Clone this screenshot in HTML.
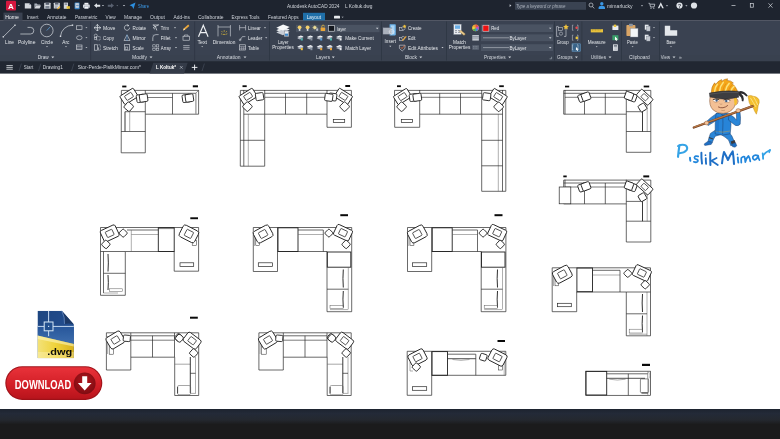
<!DOCTYPE html>
<html><head><meta charset="utf-8"><title>AutoCAD</title>
<style>
html,body{margin:0;padding:0;background:#fff;}
body{width:780px;height:439px;overflow:hidden;font-family:"Liberation Sans",sans-serif;}
svg{display:block;font-family:"Liberation Sans",sans-serif;}
</style></head><body>
<svg width="780" height="439" viewBox="0 0 780 439">
<defs><filter id="soft" x="0" y="0" width="780" height="439" filterUnits="userSpaceOnUse" color-interpolation-filters="sRGB"><feGaussianBlur stdDeviation="0.28"/></filter></defs>
<g filter="url(#soft)">
<rect x="0" y="0" width="780" height="20.6" fill="#1e242f" />
<rect x="0" y="20.4" width="780" height="41.5" fill="#3a4251" />
<rect x="0" y="55" width="780" height="6.4" fill="#39414f" />
<rect x="0" y="61.2" width="780" height="12.4" fill="#212732" />
<defs><linearGradient id="gBot" x1="0" y1="0" x2="0" y2="1"><stop offset="0" stop-color="#1d232f"/><stop offset="0.3" stop-color="#232a38"/><stop offset="0.7" stop-color="#24282f"/><stop offset="1" stop-color="#1b1b1c"/></linearGradient></defs>
<rect x="0" y="424" width="780" height="15" fill="#1b1b1c" />
<rect x="0" y="409" width="780" height="15.5" fill="url(#gBot)" />
<rect x="6" y="0.8" width="10" height="9.6" rx="1" fill="#d6173f"/>
<text x="11" y="8.68" font-size="8" fill="#fff" text-anchor="middle" font-weight="bold" font-style="normal" >A</text>
<path d="M17.8 5.0h2l-1 1.1z" fill="#cfd3da"/>
<path d="M24.8 3.2h4.4l2 1.8v3.4h-6.4z" fill="#d3d7dd"/><path d="M29.2 3.2v1.8h2z" fill="#8a93a1"/>
<path d="M34.4 3.6h2.4l0.8 0.9h2.6v1h-4.6l-1.2 2.9z" fill="#aab1bc"/><path d="M35.8 5.5h5.2l-1.4 3h-5.2z" fill="#d3d7dd"/>
<rect x="44.2" y="2.8" width="6.4" height="6" rx="0.4" fill="#d3d7dd"/><rect x="45.6" y="2.8" width="3.6" height="2" fill="#596170"/><rect x="45.4" y="6" width="4" height="2.8" fill="#7b8390"/>
<rect x="53.8" y="2.8" width="6" height="5.8" rx="0.4" fill="#d3d7dd"/><rect x="55" y="2.8" width="3.4" height="1.8" fill="#596170"/><path d="M57 8.8l2.6-2.8 0.9 0.9-2.6 2.6z" fill="#e8b23a"/><path d="M54.8 6h3m-3 1.300h2" stroke="#596170" stroke-width="0.5"/>
<rect x="63.8" y="2.600" width="4.200" height="6.200" fill="#d3d7dd"/><rect x="64.600" y="3.400" width="2.600" height="1.400" fill="#7b8390"/><rect x="66.600" y="6.200" width="3.300" height="2.600" fill="#e8c43a"/>
<rect x="74.600" y="2.400" width="5" height="6.800" rx="0.700" fill="#3b86c8"/><rect x="75.400" y="3.200" width="3.400" height="4.600" fill="#d3d7dd"/><path d="M76 5.500h2.200m-0.900-0.900l0.900 0.900-0.900 0.900" stroke="#2b6cb0" stroke-width="0.5" fill="none"/>
<rect x="83" y="4.400" width="6.800" height="3.400" rx="0.600" fill="#d3d7dd"/><rect x="84.400" y="2.800" width="4" height="1.900" fill="#eef0f3"/><rect x="84.400" y="6.600" width="4" height="2.200" fill="#f7f8fa" stroke="#8a93a1" stroke-width="0.3"/>
<path d="M94 5.5l3-2.3v1.5h3.2v2h-3.2v1.2z" fill="#dfe3e8"/>
<path d="M101.9 5.05h2.2l-1.1 1.2100000000000002z" fill="#c5cad2"/>
<path d="M114 5.5l-3-2.3v1.5h-3.2v2h3.2v1.2z" fill="#596170"/>
<path d="M116.39999999999999 5.1499999999999995h1.8l-0.9 0.9900000000000001z" fill="#7b8390"/>
<path d="M122.8 5.0h2.4l-1.2 1.32z" fill="#c5cad2"/>
<path d="M129.5 5.3l6-2.8-2 6.5-1.3-2.4z" fill="#2c8fe0"/>
<text x="138" y="7.65" font-size="5.7" fill="#3b98e6" text-anchor="start" font-weight="normal" font-style="normal"  textLength="11.0" lengthAdjust="spacingAndGlyphs">Share</text>
<text x="287" y="7.58" font-size="5.5" fill="#d3d7dd" text-anchor="start" font-weight="normal" font-style="normal"  textLength="52.5" lengthAdjust="spacingAndGlyphs">Autodesk AutoCAD 2024</text>
<text x="345" y="7.58" font-size="5.5" fill="#d3d7dd" text-anchor="start" font-weight="normal" font-style="normal"  textLength="27.4" lengthAdjust="spacingAndGlyphs">L Koltuk.dwg</text>
<path d="M509.6 4.2l1.8 1.4-1.8 1.4z" fill="#c9ced6"/>
<rect x="515" y="2" width="71" height="7.8" fill="#3a4352" />
<text x="516" y="7.56" font-size="4.6" fill="#aab1bc" text-anchor="start" font-weight="normal" font-style="italic"  textLength="49.4" lengthAdjust="spacingAndGlyphs">Type a keyword or phrase</text>
<circle cx="591" cy="5" r="2" fill="none" stroke="#c9ced6" stroke-width="0.7"/><path d="M592.4 6.5l1.8 1.9" stroke="#c9ced6" stroke-width="0.8"/>
<circle cx="601.8" cy="3.8" r="1.7" fill="#3b98e6"/><path d="M598.6 9v-1.2q0-2 3.2-2t3.2 2v1.2z" fill="#3b98e6"/>
<text x="607" y="7.82" font-size="5.6" fill="#d3d7dd" text-anchor="start" font-weight="normal" font-style="normal"  textLength="25.6" lengthAdjust="spacingAndGlyphs">mimarlucky</text>
<path d="M640.9 5.25h2.2l-1.1 1.2100000000000002z" fill="#c5cad2"/>
<path d="M648.5 3.3h1.2l0.8 3.6h3.6l0.7-2.7h-4.6" fill="none" stroke="#c9ced6" stroke-width="0.8"/><circle cx="651" cy="8.2" r="0.6" fill="#c9ced6"/><circle cx="653.8" cy="8.2" r="0.6" fill="#c9ced6"/>
<path d="M657.8 8.3l3-6 3 6h-1.6l-1.4-3-1.4 3z" fill="#dfe3e8"/>
<path d="M665.9 5.25h2.2l-1.1 1.2100000000000002z" fill="#c5cad2"/>
<circle cx="679.5" cy="5.5" r="3.1" fill="#dfe3e8"/>
<text x="679.5" y="7.50" font-size="5" fill="#1d232e" text-anchor="middle" font-weight="bold" font-style="normal" >?</text>
<path d="M685.3 5.25h2.2l-1.1 1.2100000000000002z" fill="#c5cad2"/>
<circle cx="694" cy="5.5" r="3.1" fill="#dfe3e8"/>
<path d="M731.5 5.5h4" stroke="#d3d7dd" stroke-width="0.7"/>
<rect x="750.3" y="3.6" width="3" height="3.6" fill="none" stroke="#d3d7dd" stroke-width="0.7"/>
<path d="M768.5 3.3l4 4.4m0-4.4l-4 4.4" stroke="#d3d7dd" stroke-width="0.7"/>
<rect x="3.5" y="12.6" width="19" height="8" fill="#3a4251" />
<text x="5.3" y="18.95" font-size="5.7" fill="#f2f4f6" text-anchor="start" font-weight="normal" font-style="normal"  textLength="13.6" lengthAdjust="spacingAndGlyphs">Home</text>
<text x="27" y="18.95" font-size="5.7" fill="#cfd3da" text-anchor="start" font-weight="normal" font-style="normal"  textLength="11.4" lengthAdjust="spacingAndGlyphs">Insert</text>
<text x="47" y="18.95" font-size="5.7" fill="#cfd3da" text-anchor="start" font-weight="normal" font-style="normal"  textLength="19.5" lengthAdjust="spacingAndGlyphs">Annotate</text>
<text x="75" y="18.95" font-size="5.7" fill="#cfd3da" text-anchor="start" font-weight="normal" font-style="normal"  textLength="22.4" lengthAdjust="spacingAndGlyphs">Parametric</text>
<text x="105.6" y="18.95" font-size="5.7" fill="#cfd3da" text-anchor="start" font-weight="normal" font-style="normal"  textLength="10.2" lengthAdjust="spacingAndGlyphs">View</text>
<text x="124" y="18.95" font-size="5.7" fill="#cfd3da" text-anchor="start" font-weight="normal" font-style="normal"  textLength="18.0" lengthAdjust="spacingAndGlyphs">Manage</text>
<text x="150" y="18.95" font-size="5.7" fill="#cfd3da" text-anchor="start" font-weight="normal" font-style="normal"  textLength="15.0" lengthAdjust="spacingAndGlyphs">Output</text>
<text x="173.5" y="18.95" font-size="5.7" fill="#cfd3da" text-anchor="start" font-weight="normal" font-style="normal"  textLength="16.5" lengthAdjust="spacingAndGlyphs">Add-ins</text>
<text x="198" y="18.95" font-size="5.7" fill="#cfd3da" text-anchor="start" font-weight="normal" font-style="normal"  textLength="25.6" lengthAdjust="spacingAndGlyphs">Collaborate</text>
<text x="231.5" y="18.95" font-size="5.7" fill="#cfd3da" text-anchor="start" font-weight="normal" font-style="normal"  textLength="28.0" lengthAdjust="spacingAndGlyphs">Express Tools</text>
<text x="268" y="18.95" font-size="5.7" fill="#cfd3da" text-anchor="start" font-weight="normal" font-style="normal"  textLength="30.7" lengthAdjust="spacingAndGlyphs">Featured Apps</text>
<rect x="303" y="12.8" width="22" height="7.6" fill="#1f6fa8" />
<text x="306.7" y="18.95" font-size="5.7" fill="#eaf3fb" text-anchor="start" font-weight="normal" font-style="normal"  textLength="14.3" lengthAdjust="spacingAndGlyphs">Layout</text>
<rect x="334" y="15.7" width="6" height="2.8" rx="0.5" fill="#e7eaee"/>
<path d="M341.5 16.65h2.2l-1.1 1.2100000000000002z" fill="#d0d4da"/>
<rect x="90.3" y="21.5" width="0.8" height="39" fill="#2e3643" />
<rect x="194.3" y="21.5" width="0.8" height="39" fill="#2e3643" />
<rect x="269.2" y="21.5" width="0.8" height="39" fill="#2e3643" />
<rect x="381" y="21.5" width="0.8" height="39" fill="#2e3643" />
<rect x="446" y="21.5" width="0.8" height="39" fill="#2e3643" />
<rect x="554.2" y="21.5" width="0.8" height="39" fill="#2e3643" />
<rect x="581.5" y="21.5" width="0.8" height="39" fill="#2e3643" />
<rect x="621" y="21.5" width="0.8" height="39" fill="#2e3643" />
<rect x="659" y="21.5" width="0.8" height="39" fill="#2e3643" />
<text x="37.7" y="59.18" font-size="5.5" fill="#d6dae0" text-anchor="start" font-weight="normal" font-style="normal"  textLength="11.0" lengthAdjust="spacingAndGlyphs">Draw</text>
<path d="M51.349999999999994 56.575h2.9l-1.45 1.595z" fill="#d0d4da"/>
<text x="132" y="59.18" font-size="5.5" fill="#d6dae0" text-anchor="start" font-weight="normal" font-style="normal"  textLength="15.0" lengthAdjust="spacingAndGlyphs">Modify</text>
<path d="M149.55 56.575h2.9l-1.45 1.595z" fill="#d0d4da"/>
<text x="216.7" y="59.18" font-size="5.5" fill="#d6dae0" text-anchor="start" font-weight="normal" font-style="normal"  textLength="23.8" lengthAdjust="spacingAndGlyphs">Annotation</text>
<path d="M243.55 56.575h2.9l-1.45 1.595z" fill="#d0d4da"/>
<text x="316" y="59.18" font-size="5.5" fill="#d6dae0" text-anchor="start" font-weight="normal" font-style="normal"  textLength="14.0" lengthAdjust="spacingAndGlyphs">Layers</text>
<path d="M331.85 56.575h2.9l-1.45 1.595z" fill="#d0d4da"/>
<text x="405" y="59.18" font-size="5.5" fill="#d6dae0" text-anchor="start" font-weight="normal" font-style="normal"  textLength="12.0" lengthAdjust="spacingAndGlyphs">Block</text>
<path d="M419.35 56.575h2.9l-1.45 1.595z" fill="#d0d4da"/>
<text x="484" y="59.18" font-size="5.5" fill="#d6dae0" text-anchor="start" font-weight="normal" font-style="normal"  textLength="21.6" lengthAdjust="spacingAndGlyphs">Properties</text>
<path d="M508.25 56.575h2.9l-1.45 1.595z" fill="#d0d4da"/>
<text x="557" y="59.18" font-size="5.5" fill="#d6dae0" text-anchor="start" font-weight="normal" font-style="normal"  textLength="15.5" lengthAdjust="spacingAndGlyphs">Groups</text>
<path d="M574.9499999999999 56.575h2.9l-1.45 1.595z" fill="#d0d4da"/>
<text x="590.8" y="59.18" font-size="5.5" fill="#d6dae0" text-anchor="start" font-weight="normal" font-style="normal"  textLength="15.2" lengthAdjust="spacingAndGlyphs">Utilities</text>
<path d="M608.55 56.575h2.9l-1.45 1.595z" fill="#d0d4da"/>
<text x="629" y="59.18" font-size="5.5" fill="#d6dae0" text-anchor="start" font-weight="normal" font-style="normal"  textLength="20.7" lengthAdjust="spacingAndGlyphs">Clipboard</text>
<text x="660.8" y="59.18" font-size="5.5" fill="#d6dae0" text-anchor="start" font-weight="normal" font-style="normal"  textLength="9.2" lengthAdjust="spacingAndGlyphs">View</text>
<path d="M672.55 56.575h2.9l-1.45 1.595z" fill="#d0d4da"/>
<text x="679" y="59.00" font-size="5" fill="#c5cad2" text-anchor="start" font-weight="normal" font-style="normal" >&#187;</text>
<path d="M549.6 58.8h2v-2" fill="none" stroke="#aab1bc" stroke-width="0.6"/>
<path d="M3.3 36.8L15 25.2" stroke="#d6dae0" stroke-width="0.7"/><rect x="2.6" y="36.1" width="1.4" height="1.4" fill="#d6dae0"/><rect x="14.3" y="24.5" width="1.4" height="1.4" fill="#d6dae0"/>
<text x="9.5" y="43.82" font-size="5.6" fill="#e3e6ea" text-anchor="middle" font-weight="normal" font-style="normal"  textLength="9.0" lengthAdjust="spacingAndGlyphs">Line</text>
<path d="M20.3 34h10.2a3.3 3.3 0 0 0 0-6.6h-3" fill="none" stroke="#d6dae0" stroke-width="0.7"/>
<text x="26.7" y="43.82" font-size="5.6" fill="#e3e6ea" text-anchor="middle" font-weight="normal" font-style="normal"  textLength="17.4" lengthAdjust="spacingAndGlyphs">Polyline</text>
<circle cx="46.8" cy="30.5" r="6.3" fill="none" stroke="#d6dae0" stroke-width="0.7"/><path d="M46.8 30.5l3.6-3.8" stroke="#5aa7e8" stroke-width="0.7"/>
<text x="47" y="43.82" font-size="5.6" fill="#e3e6ea" text-anchor="middle" font-weight="normal" font-style="normal"  textLength="12.0" lengthAdjust="spacingAndGlyphs">Circle</text>
<path d="M45.95 46.175000000000004h2.1l-1.05 1.1550000000000002z" fill="#d0d4da"/>
<path d="M60.5 36.3A12 12 0 0 1 72.5 25.2" fill="none" stroke="#d6dae0" stroke-width="0.7"/><rect x="59.8" y="35.6" width="1.4" height="1.4" fill="#d6dae0"/><rect x="71.8" y="24.5" width="1.4" height="1.4" fill="#d6dae0"/>
<text x="65.8" y="43.82" font-size="5.6" fill="#e3e6ea" text-anchor="middle" font-weight="normal" font-style="normal"  textLength="7.0" lengthAdjust="spacingAndGlyphs">Arc</text>
<path d="M64.95 46.175000000000004h2.1l-1.05 1.1550000000000002z" fill="#d0d4da"/>
<rect x="76.6" y="25.8" width="5.4" height="3.8" fill="none" stroke="#d6dae0" stroke-width="0.6"/>
<ellipse cx="79.3" cy="37.7" rx="2.8" ry="2" fill="none" stroke="#d6dae0" stroke-width="0.6"/>
<rect x="76.6" y="45" width="5.4" height="4.6" fill="none" stroke="#d6dae0" stroke-width="0.6"/><path d="M76.6 46.5h5.4m-5.4 1.6h5.4" stroke="#d6dae0" stroke-width="0.4"/>
<path d="M85.35000000000001 27.175h2.1l-1.05 1.1550000000000002z" fill="#d0d4da"/>
<path d="M85.35000000000001 37.175000000000004h2.1l-1.05 1.1550000000000002z" fill="#d0d4da"/>
<path d="M85.35000000000001 46.875h2.1l-1.05 1.1550000000000002z" fill="#d0d4da"/>
<path d="M97.4 24.5v6.4M94.2 27.7h6.4M96.2 25.7l1.2-1.3 1.2 1.3M96.2 29.7l1.2 1.3 1.2-1.3M95.4 26.5l-1.3 1.2 1.3 1.2M99.4 26.5l1.3 1.2-1.3 1.2" fill="none" stroke="#d6dae0" stroke-width="0.85"/>
<text x="103.0" y="29.82" font-size="5.6" fill="#e3e6ea" text-anchor="start" font-weight="normal" font-style="normal"  textLength="12.4" lengthAdjust="spacingAndGlyphs">Move</text>
<text x="103.0" y="39.82" font-size="5.6" fill="#e3e6ea" text-anchor="start" font-weight="normal" font-style="normal"  textLength="11.0" lengthAdjust="spacingAndGlyphs">Copy</text>
<text x="103.0" y="49.52" font-size="5.6" fill="#e3e6ea" text-anchor="start" font-weight="normal" font-style="normal"  textLength="15.0" lengthAdjust="spacingAndGlyphs">Stretch</text>
<path d="M129.6 27.7a2.6 2.6 0 1 1 -1.2-2.2" fill="none" stroke="#d6dae0" stroke-width="0.7"/><path d="M127.4 24.3l1.8 1.1-1.5 1.4z" fill="#d6dae0"/>
<text x="132.6" y="29.82" font-size="5.6" fill="#e3e6ea" text-anchor="start" font-weight="normal" font-style="normal"  textLength="13.5" lengthAdjust="spacingAndGlyphs">Rotate</text>
<path d="M124 40.5l3-5.6 3 5.6z" fill="none" stroke="#d6dae0" stroke-width="0.6"/><path d="M127 34.5v6.4" stroke="#5aa7e8" stroke-width="0.5"/>
<text x="132.6" y="39.82" font-size="5.6" fill="#e3e6ea" text-anchor="start" font-weight="normal" font-style="normal"  textLength="13.1" lengthAdjust="spacingAndGlyphs">Mirror</text>
<rect x="124.3" y="44.699999999999996" width="5.4" height="5.4" fill="none" stroke="#d6dae0" stroke-width="0.6"/>
<text x="132.6" y="49.52" font-size="5.6" fill="#e3e6ea" text-anchor="start" font-weight="normal" font-style="normal"  textLength="11.1" lengthAdjust="spacingAndGlyphs">Scale</text>
<text x="160.79999999999998" y="29.82" font-size="5.6" fill="#e3e6ea" text-anchor="start" font-weight="normal" font-style="normal"  textLength="8.2" lengthAdjust="spacingAndGlyphs">Trim</text>
<text x="160.79999999999998" y="39.82" font-size="5.6" fill="#e3e6ea" text-anchor="start" font-weight="normal" font-style="normal"  textLength="9.7" lengthAdjust="spacingAndGlyphs">Fillet</text>
<text x="160.79999999999998" y="49.52" font-size="5.6" fill="#e3e6ea" text-anchor="start" font-weight="normal" font-style="normal"  textLength="10.2" lengthAdjust="spacingAndGlyphs">Array</text>
<circle cx="95.8" cy="35.6" r="1.500" fill="none" stroke="#d6dae0" stroke-width="0.550"/><rect x="96.400" y="36.600" width="3.800" height="3.400" fill="none" stroke="#d6dae0" stroke-width="0.550" stroke-dasharray="1 0.500"/><rect x="94.600" y="37.400" width="2.200" height="2" fill="none" stroke="#d6dae0" stroke-width="0.500"/>
<rect x="94.600" y="44.800" width="3" height="5.400" fill="none" stroke="#d6dae0" stroke-width="0.600"/><path d="M97.600 44.800h2.800v5.400h-2.800" fill="none" stroke="#d6dae0" stroke-width="0.500" stroke-dasharray="0.900 0.500"/><path d="M98.400 47.400v2.400" stroke="#d6dae0" stroke-width="0.700"/>
<path d="M152.800 25l2.400 1 1.600 4.400M158.800 24.800l-4.600 2-0.800 1.200 1.600 1.200" fill="none" stroke="#d6dae0" stroke-width="0.800" stroke-linejoin="round"/><path d="M153 24.800h5.600" stroke="#d6dae0" stroke-width="0.500"/>
<path d="M152.800 41v-3.200a3.200 3.200 0 0 1 3.200-3.200h2.600" fill="none" stroke="#d6dae0" stroke-width="0.650"/><path d="M152.800 41v-6.400h5.800" fill="none" stroke="#8a93a1" stroke-width="0.350" stroke-dasharray="0.700 0.500"/>
<rect x="152.8" y="44.8" width="2.400" height="2.200" fill="none" stroke="#d6dae0" stroke-width="0.500"/>
<rect x="152.8" y="48.2" width="2.400" height="2.200" fill="none" stroke="#d6dae0" stroke-width="0.500"/>
<rect x="156.4" y="44.8" width="2.400" height="2.200" fill="none" stroke="#d6dae0" stroke-width="0.500"/>
<rect x="156.4" y="48.2" width="2.400" height="2.200" fill="none" stroke="#d6dae0" stroke-width="0.500"/>
<rect x="125.2" y="47" width="2.6" height="2.6" fill="none" stroke="#d6dae0" stroke-width="0.5"/>
<path d="M173.95 27.275000000000002h2.1l-1.05 1.1550000000000002z" fill="#d0d4da"/>
<path d="M174.95 37.275h2.1l-1.05 1.1550000000000002z" fill="#d0d4da"/>
<path d="M174.95 46.975h2.1l-1.05 1.1550000000000002z" fill="#d0d4da"/>
<path d="M183 30.4l1-2.2 4.2-3.6 1.2 1.3-4.2 3.7z" fill="#e9a63a"/><path d="M183 30.4l1-2.2 1.2 1.3z" fill="#f3e3c3"/>
<rect x="183" y="36.2" width="6.4" height="4" fill="none" stroke="#d6dae0" stroke-width="0.6"/><path d="M184.4 36.2v-1.2h3.6v1.2" fill="none" stroke="#d6dae0" stroke-width="0.6"/>
<path d="M183.2 45.6h6.4m-6.4 1.8h6.4m-6.4 1.8h6.4" stroke="#d6dae0" stroke-width="0.6"/>
<path d="M198.500 36.800L203.300 25.200L208.100 36.800M200.300 32.600H206.300" fill="none" stroke="#eef0f3" stroke-width="1.150" stroke-linejoin="miter"/>
<path d="M201.25 46.225h1.9l-0.95 1.045z" fill="#d0d4da"/>
<text x="202.2" y="43.82" font-size="5.6" fill="#e3e6ea" text-anchor="middle" font-weight="normal" font-style="normal"  textLength="9.6" lengthAdjust="spacingAndGlyphs">Text</text>
<path d="M218 25v11.4M230.4 25v11.4M218 27h12.4" fill="none" stroke="#d6dae0" stroke-width="0.6"/>
<path d="M224.2 30.2v1.6m-2.6-0.6l1 1.1m4.2-1.1l-1 1.1m-2.9 2.1h2.6m-4.4-0.6l1.2 0.4m5-0.4l-1.2 0.4" stroke="#e8c43a" stroke-width="0.7"/>
<text x="224.1" y="43.82" font-size="5.6" fill="#e3e6ea" text-anchor="middle" font-weight="normal" font-style="normal"  textLength="22.6" lengthAdjust="spacingAndGlyphs">Dimension</text>
<path d="M239.6 25v5.4M245.6 25v5.4M239.6 27.7h6" fill="none" stroke="#d6dae0" stroke-width="0.6"/>
<path d="M239.8 40.4l2.6-3.8h3" fill="none" stroke="#d6dae0" stroke-width="0.6"/><circle cx="240.2" cy="39.8" r="0.9" fill="none" stroke="#d6dae0" stroke-width="0.5"/>
<rect x="239.6" y="44.8" width="6" height="5.2" fill="none" stroke="#d6dae0" stroke-width="0.6"/><path d="M239.6 46.6h6m-6 1.7h6m-3.9-1.7v3.4m2-3.4v3.4" stroke="#d6dae0" stroke-width="0.4"/>
<text x="248" y="29.82" font-size="5.6" fill="#e3e6ea" text-anchor="start" font-weight="normal" font-style="normal"  textLength="12.8" lengthAdjust="spacingAndGlyphs">Linear</text>
<text x="248" y="39.82" font-size="5.6" fill="#e3e6ea" text-anchor="start" font-weight="normal" font-style="normal"  textLength="14.3" lengthAdjust="spacingAndGlyphs">Leader</text>
<text x="248" y="49.52" font-size="5.6" fill="#e3e6ea" text-anchor="start" font-weight="normal" font-style="normal"  textLength="11.0" lengthAdjust="spacingAndGlyphs">Table</text>
<path d="M263.95 27.275000000000002h2.1l-1.05 1.1550000000000002z" fill="#d0d4da"/>
<path d="M265.15 37.275h2.1l-1.05 1.1550000000000002z" fill="#d0d4da"/>
<path d="M276.3 30.2l6.8-3.4 6.6 2.6-6.8 3.6z" fill="#e9ecf0"/><path d="M276.3 32.4l6.8-3.4 6.6 2.6-6.8 3.6z" fill="#c7ccd4"/><path d="M276.3 27.8l6.8-3.4 6.6 2.6-6.8 3.6z" fill="#f7f8fa"/>
<rect x="284.2" y="31" width="4.6" height="5.6" fill="#eef0f3" stroke="#5a6372" stroke-width="0.4"/><rect x="285" y="33.6" width="3" height="2.2" fill="#3b86c8"/>
<text x="283.2" y="43.82" font-size="5.6" fill="#e3e6ea" text-anchor="middle" font-weight="normal" font-style="normal"  textLength="10.5" lengthAdjust="spacingAndGlyphs">Layer</text>
<text x="283" y="49.42" font-size="5.6" fill="#e3e6ea" text-anchor="middle" font-weight="normal" font-style="normal"  textLength="21.6" lengthAdjust="spacingAndGlyphs">Properties</text>
<rect x="296" y="24.8" width="83.5" height="7.4" fill="#4a5362" />
<circle cx="299.6" cy="27.300" r="1.900" fill="#f3cf6a"/><rect x="298.8" y="28.900" width="1.600" height="2" fill="#d9dde3"/>
<circle cx="307.6" cy="27.300" r="1.900" fill="#f3cf6a"/><rect x="306.8" y="28.900" width="1.600" height="2" fill="#d9dde3"/>
<circle cx="314.800" cy="27.600" r="1.500" fill="#f0e4a8"/><path d="M314.800 25v5.200M312.200 27.600h5.200M313 25.800l3.600 3.600M316.600 25.800l-3.600 3.600" stroke="#e8d88a" stroke-width="0.450"/><rect x="316.200" y="28.400" width="2" height="2.400" fill="#b9bfc9"/>
<rect x="320.600" y="27.600" width="4.600" height="3.400" rx="0.400" fill="#e9a63a"/><path d="M321.800 27.600v-1.200a1.300 1.300 0 0 1 2.600 0" fill="none" stroke="#f0c23c" stroke-width="0.700"/>
<rect x="328.300" y="25.600" width="6.200" height="5.600" fill="#14181f" stroke="#dfe3e8" stroke-width="0.600"/>
<text x="337" y="30.62" font-size="5.6" fill="#e4e7eb" text-anchor="start" font-weight="normal" font-style="normal"  textLength="9.0" lengthAdjust="spacingAndGlyphs">layer</text>
<path d="M375.9 27.85h2.6l-1.3 1.4300000000000002z" fill="#d0d4da"/>
<path d="M297.2 37.1l3.600-1.700 2.800 1.100-3.600 1.800z" fill="#eef0f3"/><path d="M297.2 38.400000000000006l3.600-1.700 2.800 1.100-3.600 1.800z" fill="#aab1bc"/><rect x="300.79999999999995" y="38.300000000000004" width="2" height="2.200" fill="#4fb6b0"/>
<path d="M306.8 37.1l3.600-1.700 2.800 1.100-3.600 1.800z" fill="#eef0f3"/><path d="M306.8 38.400000000000006l3.600-1.700 2.800 1.100-3.600 1.800z" fill="#aab1bc"/><rect x="310.4" y="38.300000000000004" width="2" height="2.200" fill="#8a93a1"/>
<path d="M316.6 37.1l3.600-1.700 2.800 1.100-3.600 1.800z" fill="#eef0f3"/><path d="M316.6 38.400000000000006l3.600-1.700 2.800 1.100-3.600 1.800z" fill="#aab1bc"/><rect x="320.2" y="38.300000000000004" width="2" height="2.200" fill="#5aa0dc"/>
<path d="M326.40000000000003 37.1l3.600-1.700 2.800 1.100-3.600 1.800z" fill="#eef0f3"/><path d="M326.40000000000003 38.400000000000006l3.600-1.700 2.800 1.100-3.600 1.800z" fill="#aab1bc"/><rect x="330.0" y="38.300000000000004" width="2" height="2.200" fill="#4fb6b0"/>
<path d="M336.0 37.1l3.600-1.700 2.800 1.100-3.600 1.800z" fill="#eef0f3"/><path d="M336.0 38.400000000000006l3.600-1.700 2.800 1.100-3.600 1.800z" fill="#aab1bc"/><rect x="339.59999999999997" y="38.300000000000004" width="2" height="2.200" fill="#e9ecf0"/>
<path d="M297.2 46.8l3.600-1.700 2.800 1.100-3.600 1.800z" fill="#eef0f3"/><path d="M297.2 48.1l3.600-1.700 2.800 1.100-3.600 1.800z" fill="#aab1bc"/><rect x="300.79999999999995" y="48.0" width="2" height="2.200" fill="#f0c23c"/>
<path d="M306.8 46.8l3.600-1.700 2.800 1.100-3.600 1.800z" fill="#eef0f3"/><path d="M306.8 48.1l3.600-1.700 2.800 1.100-3.600 1.800z" fill="#aab1bc"/><rect x="310.4" y="48.0" width="2" height="2.200" fill="#8a93a1"/>
<path d="M316.6 46.8l3.600-1.700 2.800 1.100-3.600 1.800z" fill="#eef0f3"/><path d="M316.6 48.1l3.600-1.700 2.800 1.100-3.600 1.800z" fill="#aab1bc"/><rect x="320.2" y="48.0" width="2" height="2.200" fill="#e9a63a"/>
<path d="M326.40000000000003 46.8l3.600-1.700 2.800 1.100-3.600 1.800z" fill="#eef0f3"/><path d="M326.40000000000003 48.1l3.600-1.700 2.800 1.100-3.600 1.800z" fill="#aab1bc"/><rect x="330.0" y="48.0" width="2" height="2.200" fill="#e9a63a"/>
<path d="M336.0 46.8l3.600-1.700 2.800 1.100-3.600 1.800z" fill="#eef0f3"/><path d="M336.0 48.1l3.600-1.700 2.800 1.100-3.600 1.800z" fill="#aab1bc"/><rect x="339.59999999999997" y="48.0" width="2" height="2.200" fill="#e9ecf0"/>
<text x="345.2" y="39.82" font-size="5.6" fill="#e3e6ea" text-anchor="start" font-weight="normal" font-style="normal"  textLength="28.6" lengthAdjust="spacingAndGlyphs">Make Current</text>
<text x="345.2" y="49.52" font-size="5.6" fill="#e3e6ea" text-anchor="start" font-weight="normal" font-style="normal"  textLength="26.0" lengthAdjust="spacingAndGlyphs">Match Layer</text>
<path d="M389.600 24.200h5.400q0.800 0 0.800 0.800v9.600q0 0.800-0.800 0.800h-5.400z" fill="#6cb4ea"/><path d="M391 25.400h3.400v8.800h-3.400z" fill="#a9d4f4"/><rect x="383" y="27.800" width="8.400" height="6.400" fill="#aab1bc" stroke="#7b8390" stroke-width="0.300"/><circle cx="391.600" cy="31.800" r="2.300" fill="none" stroke="#e9ecf0" stroke-width="0.500"/><path d="M391.600 28.800v6m-3-3h6" stroke="#e9ecf0" stroke-width="0.350"/>
<text x="390.3" y="43.42" font-size="5.6" fill="#e3e6ea" text-anchor="middle" font-weight="normal" font-style="normal"  textLength="11.4" lengthAdjust="spacingAndGlyphs">Insert</text>
<path d="M389.25 45.775h2.1l-1.05 1.1550000000000002z" fill="#d0d4da"/>
<text x="408" y="29.82" font-size="5.6" fill="#e3e6ea" text-anchor="start" font-weight="normal" font-style="normal"  textLength="13.5" lengthAdjust="spacingAndGlyphs">Create</text>
<text x="408" y="39.82" font-size="5.6" fill="#e3e6ea" text-anchor="start" font-weight="normal" font-style="normal"  textLength="7.6" lengthAdjust="spacingAndGlyphs">Edit</text>
<text x="408" y="49.52" font-size="5.6" fill="#e3e6ea" text-anchor="start" font-weight="normal" font-style="normal"  textLength="30.0" lengthAdjust="spacingAndGlyphs">Edit Attributes</text>
<rect x="399.600" y="27.400" width="3.600" height="3.200" fill="none" stroke="#d6dae0" stroke-width="0.550"/><circle cx="403.400" cy="28.200" r="1.700" fill="#3a4251" stroke="#d6dae0" stroke-width="0.500"/><path d="M404.600 24.400l0.600 1.200 1.300 0.200-0.900 0.900 0.200 1.300-1.200-0.600-1.200 0.600 0.200-1.300-0.900-0.900 1.300-0.200z" fill="#f0c23c"/>
<rect x="399.600" y="37.400" width="3.600" height="3.200" fill="none" stroke="#d6dae0" stroke-width="0.550"/><circle cx="403.200" cy="38" r="1.600" fill="#3a4251" stroke="#d6dae0" stroke-width="0.500"/><path d="M402.400 39.800l3.400-3.800 0.900 0.800-3.400 3.800-1.200 0.300z" fill="#e9a63a"/>
<path d="M399.400 45.200h5.600v3.200l-2.800 2.600-2.800-2.600z" fill="none" stroke="#d6dae0" stroke-width="0.600"/><path d="M400.800 47.200l1.200 1.400 2.600-3" fill="none" stroke="#e8703a" stroke-width="0.800"/>
<path d="M441.45 46.975h2.1l-1.05 1.1550000000000002z" fill="#d0d4da"/>
<rect x="453.8" y="24.2" width="7.4" height="10.2" fill="#e9ecf0" stroke="#8a93a1" stroke-width="0.4"/><rect x="455" y="25.4" width="5" height="3.4" fill="#6cb0e8"/><path d="M455 30.6h2m1 0h2m-5 1.8h2m1 0h2" stroke="#596170" stroke-width="0.6"/><path d="M459.4 31.6l4.6 4 1.4-1.6-4.4-3.8z" fill="#e8c88a" stroke="#8b6a2a" stroke-width="0.3"/>
<text x="459.5" y="43.82" font-size="5.6" fill="#e3e6ea" text-anchor="middle" font-weight="normal" font-style="normal"  textLength="13.0" lengthAdjust="spacingAndGlyphs">Match</text>
<text x="459.5" y="49.42" font-size="5.6" fill="#e3e6ea" text-anchor="middle" font-weight="normal" font-style="normal"  textLength="21.6" lengthAdjust="spacingAndGlyphs">Properties</text>
<circle cx="475.6" cy="27.9" r="3.3" fill="#e8a13a"/><path d="M475.6 27.9v-3.3a3.3 3.3 0 0 1 2.86 1.65z" fill="#e84a4a"/><path d="M475.6 27.9l2.86-1.65a3.3 3.3 0 0 1 0 3.3z" fill="#b04ad8"/><path d="M475.6 27.9l2.86 1.65a3.3 3.3 0 0 1 -2.86 1.65z" fill="#3b86e8"/><path d="M475.6 27.9v3.3a3.3 3.3 0 0 1 -2.86-1.65z" fill="#38b26a"/><path d="M475.6 27.9l-2.86 1.65a3.3 3.3 0 0 1 0-3.3z" fill="#e8d83a"/>
<rect x="472.3" y="35" width="6.6" height="5.6" fill="#c3c8d0"/><path d="M472.3 36.4h6.6m-6.6 1.6h6.6" stroke="#596170" stroke-width="0.5"/>
<rect x="472.3" y="45.2" width="6.6" height="4.6" fill="#5a6372"/><path d="M473 46.6h5.2m-5.2 1.6h5.2" stroke="#aab1bc" stroke-width="0.4" stroke-dasharray="1 0.6"/>
<rect x="481" y="24.4" width="72" height="7.6" fill="#4a5362" />
<rect x="481" y="34.4" width="72" height="6.8" fill="#4a5362" />
<rect x="481" y="44.2" width="72" height="6.8" fill="#4a5362" />
<rect x="482.9" y="25.2" width="6" height="6" fill="#ee1111" stroke="#e7eaee" stroke-width="0.5"/>
<text x="491.2" y="30.42" font-size="5.6" fill="#e4e7eb" text-anchor="start" font-weight="normal" font-style="normal"  textLength="8.0" lengthAdjust="spacingAndGlyphs">Red</text>
<path d="M483 37.8h26" stroke="#d6dae0" stroke-width="0.5"/>
<text x="509.4" y="39.78" font-size="5.5" fill="#e4e7eb" text-anchor="start" font-weight="normal" font-style="normal"  textLength="17.0" lengthAdjust="spacingAndGlyphs">ByLayer</text>
<path d="M483 47.6h26" stroke="#d6dae0" stroke-width="0.5"/>
<text x="509.4" y="49.58" font-size="5.5" fill="#e4e7eb" text-anchor="start" font-weight="normal" font-style="normal"  textLength="17.0" lengthAdjust="spacingAndGlyphs">ByLayer</text>
<path d="M548.9000000000001 27.650000000000002h2.6l-1.3 1.4300000000000002z" fill="#d0d4da"/>
<path d="M548.9000000000001 37.25h2.6l-1.3 1.4300000000000002z" fill="#d0d4da"/>
<path d="M548.9000000000001 47.050000000000004h2.6l-1.3 1.4300000000000002z" fill="#d0d4da"/>
<path d="M558.6 26.4h-2v10h2m5.4 0h2v-10h-2" fill="none" stroke="#d6dae0" stroke-width="0.6"/><rect x="558.6" y="27.4" width="4" height="3.2" fill="none" stroke="#d6dae0" stroke-width="0.5"/><circle cx="561" cy="33.6" r="1.6" fill="none" stroke="#d6dae0" stroke-width="0.5"/><path d="M566 24l0.9 1.9 2 0.3-1.5 1.4 0.4 2-1.8-1-1.8 1 0.4-2-1.5-1.4 2-0.3z" fill="#f0c23c"/>
<text x="562.7" y="43.82" font-size="5.6" fill="#e3e6ea" text-anchor="middle" font-weight="normal" font-style="normal"  textLength="12.0" lengthAdjust="spacingAndGlyphs">Group</text>
<rect x="572" y="43.8" width="8.4" height="7.6" fill="#3a6489" stroke="#6aa3d0" stroke-width="0.45"/>
<path d="M573.4 25.099999999999998h-1v5.2h1m3.6 0h1v-5.2h-1" fill="none" stroke="#d6dae0" stroke-width="0.5"/>
<path d="M573.4 35.1h-1v5.2h1m3.6 0h1v-5.2h-1" fill="none" stroke="#d6dae0" stroke-width="0.5"/>
<path d="M573.4 44.8h-1v5.2h1m3.6 0h1v-5.2h-1" fill="none" stroke="#d6dae0" stroke-width="0.5"/>
<circle cx="576.6" cy="27.7" r="1.2" fill="#e84a4a"/><circle cx="576.8" cy="37.9" r="1.3" fill="#e8c43a"/><path d="M576 47l2.6 2.4-1.2 0.1 0.6 1.3-0.7 0.3-0.6-1.3-0.8 0.8z" fill="#fff"/>
<rect x="590.8" y="29.2" width="12.2" height="3.200" fill="#e8c23c"/><path d="M592.4 29.2v1.6m1.6-1.6v1.2m1.6-1.2v1.6m1.6-1.6v1.2m1.6-1.2v1.6m1.6-1.6v1.2" stroke="#7a6420" stroke-width="0.3"/>
<text x="596.7" y="43.82" font-size="5.6" fill="#e3e6ea" text-anchor="middle" font-weight="normal" font-style="normal"  textLength="17.9" lengthAdjust="spacingAndGlyphs">Measure</text>
<path d="M595.75 46.225h1.9l-0.95 1.045z" fill="#d0d4da"/>
<rect x="612.4" y="25.6" width="6" height="4.4" fill="#e9ecf0"/><rect x="613.8" y="24.6" width="2.4" height="2.4" fill="#e8c43a"/>
<rect x="612.4" y="35.2" width="6" height="5" fill="#3aa06a"/><path d="M615 36.6l3 2.8-1.4 0.1 0.6 1.3-0.7 0.3-0.6-1.3-0.9 0.8z" fill="#fff"/>
<rect x="613" y="44.4" width="4.8" height="6.4" fill="#e9ecf0"/><rect x="613.8" y="45.2" width="3.2" height="1.4" fill="#596170"/><path d="M613.8 47.8h3.2m-3.2 1.4h3.2" stroke="#596170" stroke-width="0.5" stroke-dasharray="0.8 0.4"/>
<rect x="626.4" y="25" width="9" height="11" rx="0.8" fill="#d9a566"/><rect x="629" y="23.8" width="3.8" height="2.4" rx="0.5" fill="#8a93a1"/><rect x="630.4" y="28.4" width="7.6" height="8.6" fill="#f3f5f7" stroke="#8a93a1" stroke-width="0.4"/>
<text x="632.4" y="43.82" font-size="5.6" fill="#e3e6ea" text-anchor="middle" font-weight="normal" font-style="normal"  textLength="10.7" lengthAdjust="spacingAndGlyphs">Paste</text>
<path d="M631.65 46.225h1.9l-0.95 1.045z" fill="#d0d4da"/>
<rect x="644.8" y="24.7" width="3.8" height="5" fill="#e9ecf0"/><rect x="646.4" y="26.099999999999998" width="3.8" height="5" fill="#c3c8d0" stroke="#596170" stroke-width="0.3"/>
<path d="M652.95 27.175h2.1l-1.05 1.1550000000000002z" fill="#d0d4da"/>
<rect x="644.8" y="34.7" width="3.8" height="5" fill="#e9ecf0"/><rect x="646.4" y="36.1" width="3.8" height="5" fill="#c3c8d0" stroke="#596170" stroke-width="0.3"/>
<path d="M652.95 37.175000000000004h2.1l-1.05 1.1550000000000002z" fill="#d0d4da"/>
<path d="M664.8 25.8h5.4v4.4h7v5.6h-12.4z" fill="#e4e7eb"/>
<text x="671" y="43.82" font-size="5.6" fill="#e3e6ea" text-anchor="middle" font-weight="normal" font-style="normal"  textLength="9.2" lengthAdjust="spacingAndGlyphs">Base</text>
<path d="M670.05 46.225h1.9l-0.95 1.045z" fill="#d0d4da"/>
<path d="M6.4 65.6h6.4" stroke="#e4e7eb" stroke-width="0.8"/>
<path d="M6.4 67.4h6.4" stroke="#e4e7eb" stroke-width="0.8"/>
<path d="M6.4 69.2h6.4" stroke="#e4e7eb" stroke-width="0.8"/>
<path d="M149.7 73.6l3.6-10.800h34.400l-3.600 10.800z" fill="#343b48"/>
<path d="M19 71l2.4-7.4" stroke="#4a5362" stroke-width="0.6"/>
<path d="M38.5 71l2.4-7.4" stroke="#4a5362" stroke-width="0.6"/>
<path d="M71.5 71l2.4-7.4" stroke="#4a5362" stroke-width="0.6"/>
<path d="M202 71l2.4-7.4" stroke="#4a5362" stroke-width="0.6"/>
<text x="23.8" y="69.42" font-size="5.6" fill="#d3d7dd" text-anchor="start" font-weight="normal" font-style="normal"  textLength="9.5" lengthAdjust="spacingAndGlyphs">Start</text>
<text x="42.8" y="69.42" font-size="5.6" fill="#d3d7dd" text-anchor="start" font-weight="normal" font-style="normal"  textLength="20.0" lengthAdjust="spacingAndGlyphs">Drawing1</text>
<text x="77.7" y="69.42" font-size="5.6" fill="#d3d7dd" text-anchor="start" font-weight="normal" font-style="normal"  textLength="63.3" lengthAdjust="spacingAndGlyphs">Stor-Perde-PislikMimar.com*</text>
<text x="156" y="69.45" font-size="5.7" fill="#ffffff" text-anchor="start" font-weight="bold" font-style="normal"  textLength="20.0" lengthAdjust="spacingAndGlyphs">L Koltuk*</text>
<path d="M180 66.1l2.6 2.6m0-2.6l-2.6 2.6" stroke="#c9ced6" stroke-width="0.6"/>
<path d="M191.8 67.4h5.600m-2.800-2.800v5.600" stroke="#f0f2f5" stroke-width="0.950"/>
<path d="M121.4 90.4L198.6 90.4L198.6 114.2L145.3 114.2L145.3 152.8L121.2 152.8z" stroke="#242424" stroke-width="0.68" fill="none" stroke-linejoin="miter"/>
<path d="M145.3 93.3L195.9 93.3" stroke="#242424" stroke-width="0.68" fill="none"/>
<path d="M145.8 97.5L172.5 97.5" stroke="#242424" stroke-width="0.6" fill="none"/>
<path d="M172.5 93.3L172.5 114.2" stroke="#242424" stroke-width="0.68" fill="none"/>
<path d="M195.9 93.3L195.9 114.2" stroke="#8f8f8f" stroke-width="1.2" fill="none"/>
<path d="M198.6 90.4L195.6 93.3" stroke="#242424" stroke-width="0.5" fill="none"/>
<path d="M145.3 90.4L145.3 114.2" stroke="#242424" stroke-width="0.68" fill="none"/>
<path d="M125.0 111.7L145.3 111.7" stroke="#242424" stroke-width="0.68" fill="none"/>
<path d="M121.2 131.5L145.3 131.5" stroke="#242424" stroke-width="0.68" fill="none"/>
<path d="M125.0 111.7L125.0 131.5" stroke="#242424" stroke-width="0.9" fill="none"/>
<path d="M129.7 111.7L129.7 131.5" stroke="#5e5e5e" stroke-width="0.5" fill="none"/>
<g transform="translate(129.0 96.4) rotate(-32)"><rect x="-7.90" y="-5.00" width="15.8" height="10" rx="1.0" fill="#fff" stroke="#242424" stroke-width="0.88"/><rect x="-3.85" y="-2.55" width="7.7" height="5.1" rx="0.6" fill="none" stroke="#242424" stroke-width="0.7040000000000001"/></g>
<g transform="translate(128.7 106.7) rotate(40)"><rect x="-3.70" y="-3.70" width="7.4" height="7.4" rx="1.2" fill="#fff" stroke="#242424" stroke-width="0.88"/></g>
<g transform="translate(140.6 98.4) rotate(-8)"><rect x="-4.00" y="-3.80" width="8" height="7.6" rx="1.2" fill="#fff" stroke="#242424" stroke-width="0.88"/></g>
<g transform="translate(143.6 98.0) rotate(-8)"><rect x="-4.00" y="-3.80" width="8" height="7.6" rx="1.2" fill="#fff" stroke="#242424" stroke-width="0.88"/></g>
<g transform="translate(186.4 98.4) rotate(-8)"><rect x="-4.00" y="-3.80" width="8" height="7.6" rx="1.2" fill="#fff" stroke="#242424" stroke-width="0.88"/></g>
<g transform="translate(189.4 98.0) rotate(-8)"><rect x="-4.00" y="-3.80" width="8" height="7.6" rx="1.2" fill="#fff" stroke="#242424" stroke-width="0.88"/></g>
<rect x="122.2" y="85.6" width="4.2" height="1.8" fill="#0a0a0a"/>
<rect x="192.8" y="85.3" width="5.2" height="2" fill="#0a0a0a"/>
<path d="M240.4 90.4L351.4 90.4L351.4 127.3L327.0 127.3L327.0 114.2L264.7 114.2L264.7 166.2L240.3 166.2z" stroke="#242424" stroke-width="0.68" fill="none" stroke-linejoin="miter"/>
<path d="M264.7 93.3L327.0 93.3" stroke="#242424" stroke-width="0.68" fill="none"/>
<path d="M265.0 97.3L326.7 97.3" stroke="#242424" stroke-width="0.6" fill="none"/>
<path d="M264.7 90.0L264.7 114.2" stroke="#242424" stroke-width="0.68" fill="none"/>
<path d="M285.5 93.3L285.5 114.2" stroke="#242424" stroke-width="0.68" fill="none"/>
<path d="M306.7 93.3L306.7 114.2" stroke="#242424" stroke-width="0.68" fill="none"/>
<path d="M327.0 90.0L327.0 114.2" stroke="#242424" stroke-width="0.68" fill="none"/>
<path d="M243.8 90.0L243.8 166.2" stroke="#242424" stroke-width="0.68" fill="none"/>
<path d="M248.3 114.2L248.3 166.2" stroke="#5e5e5e" stroke-width="0.5" fill="none"/>
<path d="M243.8 114.2L264.7 114.2" stroke="#242424" stroke-width="0.68" fill="none"/>
<path d="M240.3 140.3L264.7 140.3" stroke="#242424" stroke-width="0.68" fill="none"/>
<rect x="333.3" y="119.5" width="11.4" height="3.0" rx="0" stroke="#242424" stroke-width="0.68" fill="none"/>
<g transform="translate(248.1 96.4) rotate(-32)"><rect x="-7.90" y="-5.00" width="15.8" height="10" rx="1.0" fill="#fff" stroke="#242424" stroke-width="0.88"/><rect x="-3.85" y="-2.55" width="7.7" height="5.1" rx="0.6" fill="none" stroke="#242424" stroke-width="0.7040000000000001"/></g>
<g transform="translate(247.4 106.6) rotate(43)"><rect x="-3.70" y="-3.70" width="7.4" height="7.4" rx="1.2" fill="#fff" stroke="#242424" stroke-width="0.88"/></g>
<g transform="translate(259.6 96.6) rotate(-9)"><rect x="-3.90" y="-3.65" width="7.8" height="7.3" rx="1.2" fill="#fff" stroke="#242424" stroke-width="0.88"/></g>
<g transform="translate(343.4 96.4) rotate(32)"><rect x="-7.90" y="-5.00" width="15.8" height="10" rx="1.0" fill="#fff" stroke="#242424" stroke-width="0.88"/><rect x="-3.85" y="-2.55" width="7.7" height="5.1" rx="0.6" fill="none" stroke="#242424" stroke-width="0.7040000000000001"/></g>
<g transform="translate(344.6 106.6) rotate(45)"><rect x="-3.70" y="-3.70" width="7.4" height="7.4" rx="1.2" fill="#fff" stroke="#242424" stroke-width="0.88"/></g>
<g transform="translate(332.7 97.0) rotate(8)"><rect x="-3.90" y="-3.65" width="7.8" height="7.3" rx="1.2" fill="#fff" stroke="#242424" stroke-width="0.88"/></g>
<g transform="translate(328.8 97.4) rotate(8)"><rect x="-3.90" y="-3.65" width="7.8" height="7.3" rx="1.2" fill="#fff" stroke="#242424" stroke-width="0.88"/></g>
<rect x="242.5" y="85.3" width="4.2" height="1.8" fill="#0a0a0a"/>
<rect x="345.3" y="85.0" width="4.8" height="2" fill="#0a0a0a"/>
<path d="M394.5 90.4L505.8 90.4L505.8 191.3L481.7 191.3L481.7 114.2L419.7 114.2L419.7 127.3L394.7 127.3z" stroke="#242424" stroke-width="0.68" fill="none" stroke-linejoin="miter"/>
<path d="M419.7 93.3L481.7 93.3" stroke="#242424" stroke-width="0.68" fill="none"/>
<path d="M419.7 97.3L481.7 97.3" stroke="#242424" stroke-width="0.6" fill="none"/>
<path d="M419.7 90.0L419.7 114.2" stroke="#242424" stroke-width="0.68" fill="none"/>
<path d="M439.7 93.3L439.7 114.2" stroke="#242424" stroke-width="0.68" fill="none"/>
<path d="M460.5 93.3L460.5 114.2" stroke="#242424" stroke-width="0.68" fill="none"/>
<path d="M481.7 90.0L481.7 114.2" stroke="#242424" stroke-width="0.68" fill="none"/>
<path d="M502.5 90.0L502.5 191.3" stroke="#242424" stroke-width="0.68" fill="none"/>
<path d="M498.3 114.2L498.3 191.3" stroke="#5e5e5e" stroke-width="0.5" fill="none"/>
<path d="M481.7 114.2L502.5 114.2" stroke="#242424" stroke-width="0.68" fill="none"/>
<path d="M481.7 140.3L502.5 140.3" stroke="#242424" stroke-width="0.68" fill="none"/>
<path d="M481.7 165.8L502.5 165.8" stroke="#242424" stroke-width="0.68" fill="none"/>
<rect x="401.3" y="119.5" width="11.2" height="3.0" rx="0" stroke="#242424" stroke-width="0.68" fill="none"/>
<g transform="translate(402.5 96.6) rotate(-32)"><rect x="-7.90" y="-5.00" width="15.8" height="10" rx="1.0" fill="#fff" stroke="#242424" stroke-width="0.88"/><rect x="-3.85" y="-2.55" width="7.7" height="5.1" rx="0.6" fill="none" stroke="#242424" stroke-width="0.7040000000000001"/></g>
<g transform="translate(401.6 106.7) rotate(43)"><rect x="-3.70" y="-3.70" width="7.4" height="7.4" rx="1.2" fill="#fff" stroke="#242424" stroke-width="0.88"/></g>
<g transform="translate(413.6 97.5) rotate(-8)"><rect x="-4.10" y="-3.65" width="8.2" height="7.3" rx="1.2" fill="#fff" stroke="#242424" stroke-width="0.88"/></g>
<g transform="translate(417.3 97.3) rotate(-8)"><rect x="-4.10" y="-3.65" width="8.2" height="7.3" rx="1.2" fill="#fff" stroke="#242424" stroke-width="0.88"/></g>
<g transform="translate(498.2 96.6) rotate(32)"><rect x="-7.90" y="-5.00" width="15.8" height="10" rx="1.0" fill="#fff" stroke="#242424" stroke-width="0.88"/><rect x="-3.85" y="-2.55" width="7.7" height="5.1" rx="0.6" fill="none" stroke="#242424" stroke-width="0.7040000000000001"/></g>
<g transform="translate(498.7 106.8) rotate(45)"><rect x="-3.70" y="-3.70" width="7.4" height="7.4" rx="1.2" fill="#fff" stroke="#242424" stroke-width="0.88"/></g>
<g transform="translate(486.7 96.7) rotate(8)"><rect x="-3.90" y="-3.65" width="7.8" height="7.3" rx="1.2" fill="#fff" stroke="#242424" stroke-width="0.88"/></g>
<rect x="397.0" y="85.3" width="3.9" height="1.8" fill="#0a0a0a"/>
<rect x="499.2" y="85.3" width="4.6" height="1.8" fill="#0a0a0a"/>
<path d="M563.7 90.4L650.8 90.4L650.8 152.3L626.3 152.3L626.3 114.2L563.7 114.2z" stroke="#242424" stroke-width="0.68" fill="none" stroke-linejoin="miter"/>
<path d="M563.7 93.3L626.3 93.3" stroke="#242424" stroke-width="0.68" fill="none"/>
<path d="M565.0 97.3L626.3 97.3" stroke="#242424" stroke-width="0.6" fill="none"/>
<path d="M565.0 90.0L565.0 114.2" stroke="#242424" stroke-width="0.68" fill="none"/>
<path d="M584.5 97.3L584.5 114.2" stroke="#242424" stroke-width="0.68" fill="none"/>
<path d="M605.3 93.3L605.3 114.2" stroke="#242424" stroke-width="0.68" fill="none"/>
<path d="M626.3 90.0L626.3 114.2" stroke="#242424" stroke-width="0.68" fill="none"/>
<path d="M626.3 111.7L642.5 111.7" stroke="#242424" stroke-width="0.68" fill="none"/>
<path d="M642.5 108.0L642.5 131.5" stroke="#242424" stroke-width="0.9" fill="none"/>
<path d="M647.2 100.0L647.2 131.5" stroke="#5e5e5e" stroke-width="0.5" fill="none"/>
<path d="M626.3 131.5L650.8 131.5" stroke="#242424" stroke-width="0.68" fill="none"/>
<g transform="translate(582.4 97.8) rotate(-20)"><rect x="-4.00" y="-3.70" width="8" height="7.4" rx="1.2" fill="#fff" stroke="#242424" stroke-width="0.88"/></g>
<g transform="translate(586.0 96.6) rotate(-20)"><rect x="-4.20" y="-3.80" width="8.4" height="7.6" rx="1.2" fill="#fff" stroke="#242424" stroke-width="0.88"/></g>
<g transform="translate(632.3 97.4) rotate(20)"><rect x="-4.00" y="-3.70" width="8" height="7.4" rx="1.2" fill="#fff" stroke="#242424" stroke-width="0.88"/></g>
<g transform="translate(629.0 96.0) rotate(20)"><rect x="-4.00" y="-3.80" width="8" height="7.6" rx="1.2" fill="#fff" stroke="#242424" stroke-width="0.88"/></g>
<g transform="translate(644.7 97.2) rotate(42)"><rect x="-7.85" y="-4.10" width="15.7" height="8.2" rx="1.0" fill="#fff" stroke="#242424" stroke-width="0.88"/><rect x="-3.15" y="-2.30" width="6.3" height="4.6" rx="0.6" fill="none" stroke="#242424" stroke-width="0.7040000000000001"/></g>
<g transform="translate(642.5 107.5) rotate(-30)"><rect x="-3.50" y="-3.50" width="7" height="7" rx="1.2" fill="#fff" stroke="#242424" stroke-width="0.88"/></g>
<rect x="565.0" y="85.7" width="4.2" height="1.7" fill="#0a0a0a"/>
<rect x="643.7" y="85.6" width="5.5" height="1.8" fill="#0a0a0a"/>
<path d="M563.7 180.1L650.8 180.1L650.8 242.0L626.3 242.0L626.3 203.9L563.7 203.9z" stroke="#242424" stroke-width="0.68" fill="none" stroke-linejoin="miter"/>
<path d="M563.7 183.0L626.3 183.0" stroke="#242424" stroke-width="0.68" fill="none"/>
<path d="M565.0 187.0L626.3 187.0" stroke="#242424" stroke-width="0.6" fill="none"/>
<path d="M565.0 179.7L565.0 203.9" stroke="#242424" stroke-width="0.68" fill="none"/>
<path d="M584.5 187.0L584.5 203.9" stroke="#242424" stroke-width="0.68" fill="none"/>
<path d="M605.3 183.0L605.3 203.9" stroke="#242424" stroke-width="0.68" fill="none"/>
<path d="M626.3 179.7L626.3 203.9" stroke="#242424" stroke-width="0.68" fill="none"/>
<path d="M626.3 201.4L642.5 201.4" stroke="#242424" stroke-width="0.68" fill="none"/>
<path d="M642.5 197.7L642.5 221.2" stroke="#242424" stroke-width="0.9" fill="none"/>
<path d="M647.2 189.7L647.2 221.2" stroke="#5e5e5e" stroke-width="0.5" fill="none"/>
<path d="M626.3 221.2L650.8 221.2" stroke="#242424" stroke-width="0.68" fill="none"/>
<g transform="translate(582.4 187.5) rotate(-20)"><rect x="-4.00" y="-3.70" width="8" height="7.4" rx="1.2" fill="#fff" stroke="#242424" stroke-width="0.88"/></g>
<g transform="translate(586.0 186.3) rotate(-20)"><rect x="-4.20" y="-3.80" width="8.4" height="7.6" rx="1.2" fill="#fff" stroke="#242424" stroke-width="0.88"/></g>
<g transform="translate(632.3 187.1) rotate(20)"><rect x="-4.00" y="-3.70" width="8" height="7.4" rx="1.2" fill="#fff" stroke="#242424" stroke-width="0.88"/></g>
<g transform="translate(629.0 185.7) rotate(20)"><rect x="-4.00" y="-3.80" width="8" height="7.6" rx="1.2" fill="#fff" stroke="#242424" stroke-width="0.88"/></g>
<g transform="translate(644.7 186.9) rotate(42)"><rect x="-7.85" y="-4.10" width="15.7" height="8.2" rx="1.0" fill="#fff" stroke="#242424" stroke-width="0.88"/><rect x="-3.15" y="-2.30" width="6.3" height="4.6" rx="0.6" fill="none" stroke="#242424" stroke-width="0.7040000000000001"/></g>
<g transform="translate(642.5 197.2) rotate(-30)"><rect x="-3.50" y="-3.50" width="7" height="7" rx="1.2" fill="#fff" stroke="#242424" stroke-width="0.88"/></g>
<rect x="559.2" y="187.0" width="11.6" height="16.8" rx="0" stroke="#242424" stroke-width="0.68" fill="#fff"/>
<rect x="563.3" y="175.5" width="3.4" height="1.8" fill="#0a0a0a"/>
<rect x="643.3" y="175.4" width="5.9" height="2" fill="#0a0a0a"/>
<path d="M100.5 227.5L198.6 227.5L198.6 271.2L174.2 271.2L174.2 251.5L125.3 251.5L125.3 295.3L100.5 295.3z" stroke="#242424" stroke-width="0.68" fill="none" stroke-linejoin="miter"/>
<path d="M127.0 230.0L158.3 230.0" stroke="#242424" stroke-width="0.68" fill="none"/>
<path d="M131.3 234.5L158.3 234.5" stroke="#5e5e5e" stroke-width="0.5" fill="none"/>
<path d="M131.3 230.0L131.3 251.5" stroke="#5e5e5e" stroke-width="0.5" fill="none"/>
<rect x="158.3" y="227.7" width="15.9" height="23.8" rx="0" stroke="#242424" stroke-width="0.92" fill="none"/>
<path d="M158.3 228.6L174.2 228.6" stroke="#242424" stroke-width="0.5" fill="none"/>
<rect x="192.2" y="240.4" width="4.4" height="5.2" rx="0" stroke="#242424" stroke-width="0.5" fill="none"/>
<rect x="180.0" y="262.8" width="13.7" height="3.7" rx="0" stroke="#242424" stroke-width="0.68" fill="none"/>
<path d="M103.5 251.5L103.5 293.0" stroke="#242424" stroke-width="0.68" fill="none"/>
<path d="M108 254q0.700 9 0 17.500M108 275q0.700 7.500 0 15" stroke="#242424" stroke-width="0.950" fill="none"/>
<path d="M100.5 251.5L125.3 251.5" stroke="#242424" stroke-width="0.68" fill="none"/>
<path d="M103.5 273.3L125.3 273.3" stroke="#242424" stroke-width="0.68" fill="none"/>
<rect x="109.7" y="288.8" width="12.8" height="2.9" rx="0" stroke="#5e5e5e" stroke-width="0.5" fill="none"/>
<path d="M103.5 293.0L118.0 293.0" stroke="#5e5e5e" stroke-width="0.5" fill="none"/>
<g transform="translate(109.7 233.4) rotate(-25)"><rect x="-8.20" y="-6.20" width="16.4" height="12.4" rx="1.8" fill="#fff" stroke="#242424" stroke-width="0.88"/><rect x="-3.65" y="-3.00" width="7.3" height="6" rx="0.6" fill="none" stroke="#242424" stroke-width="0.7040000000000001"/></g>
<g transform="translate(123.2 233.1) rotate(45)"><rect x="-3.15" y="-3.15" width="6.3" height="6.3" rx="1.2" fill="#fff" stroke="#242424" stroke-width="0.88"/></g>
<g transform="translate(105.9 244.4) rotate(42)"><rect x="-3.30" y="-3.30" width="6.6" height="6.6" rx="1.2" fill="#fff" stroke="#242424" stroke-width="0.88"/></g>
<g transform="translate(188.9 233.9) rotate(27)"><rect x="-8.60" y="-6.50" width="17.2" height="13" rx="2.4" fill="#fff" stroke="#242424" stroke-width="0.88"/><rect x="-3.70" y="-3.40" width="7.4" height="6.8" rx="0.6" fill="none" stroke="#242424" stroke-width="0.7040000000000001"/></g>
<rect x="190.3" y="217.3" width="7.7" height="1.9" fill="#0a0a0a"/>
<path d="M253.3 227.5L351.7 227.5L351.7 311.7L327.0 311.7L327.0 251.5L277.5 251.5L277.5 271.5L253.3 271.5z" stroke="#242424" stroke-width="0.68" fill="none" stroke-linejoin="miter"/>
<rect x="278.0" y="227.8" width="20.0" height="23.7" rx="0" stroke="#242424" stroke-width="0.92" fill="none"/>
<path d="M298.0 230.0L323.3 230.0" stroke="#242424" stroke-width="0.68" fill="none"/>
<path d="M298.0 234.5L323.3 234.5" stroke="#5e5e5e" stroke-width="0.5" fill="none"/>
<path d="M323.3 230.0L323.3 251.5" stroke="#242424" stroke-width="0.68" fill="none"/>
<path d="M277.5 227.5L277.5 251.5" stroke="#242424" stroke-width="0.68" fill="none"/>
<rect x="255.8" y="238.7" width="3.9" height="6.6" rx="0" stroke="#242424" stroke-width="0.5" fill="none"/>
<path d="M254.6 231.0L254.6 246.0" stroke="#5e5e5e" stroke-width="0.5" fill="none"/>
<rect x="258.3" y="262.8" width="14.2" height="3.7" rx="0" stroke="#242424" stroke-width="0.68" fill="none"/>
<rect x="327.3" y="252.0" width="23.5" height="15.2" rx="0" stroke="#242424" stroke-width="0.92" fill="none"/>
<path d="M343.3 269.500q-0.700 9 0 18M343.3 291q-0.700 8 0 16.500" stroke="#242424" stroke-width="0.950" fill="none"/>
<path d="M348.3 267.2L348.3 309.0" stroke="#5e5e5e" stroke-width="0.5" fill="none"/>
<path d="M327.0 289.2L348.3 289.2" stroke="#242424" stroke-width="0.68" fill="none"/>
<rect x="330.0" y="305.3" width="13.3" height="3.0" rx="0" stroke="#5e5e5e" stroke-width="0.5" fill="none"/>
<path d="M330.0 309.6L348.3 309.6" stroke="#5e5e5e" stroke-width="0.5" fill="none"/>
<g transform="translate(263.1 234.0) rotate(-28)"><rect x="-8.70" y="-6.50" width="17.4" height="13" rx="2.4" fill="#fff" stroke="#242424" stroke-width="0.88"/><rect x="-3.85" y="-3.25" width="7.7" height="6.5" rx="0.6" fill="none" stroke="#242424" stroke-width="0.7040000000000001"/></g>
<g transform="translate(343.0 232.7) rotate(25)"><rect x="-8.40" y="-5.80" width="16.8" height="11.6" rx="1.6" fill="#fff" stroke="#242424" stroke-width="0.88"/><rect x="-3.75" y="-3.05" width="7.5" height="6.1" rx="0.6" fill="none" stroke="#242424" stroke-width="0.7040000000000001"/></g>
<g transform="translate(328.9 233.1) rotate(45)"><rect x="-3.10" y="-3.10" width="6.2" height="6.2" rx="1.2" fill="#fff" stroke="#242424" stroke-width="0.88"/></g>
<g transform="translate(346.1 244.4) rotate(43)"><rect x="-3.25" y="-3.25" width="6.5" height="6.5" rx="1.2" fill="#fff" stroke="#242424" stroke-width="0.88"/></g>
<rect x="340.3" y="214.2" width="7.7" height="2" fill="#0a0a0a"/>
<path d="M407.5 227.5L505.9 227.5L505.9 311.7L481.2 311.7L481.2 251.5L431.7 251.5L431.7 271.5L407.5 271.5z" stroke="#242424" stroke-width="0.68" fill="none" stroke-linejoin="miter"/>
<rect x="432.2" y="227.8" width="20.0" height="23.7" rx="0" stroke="#242424" stroke-width="0.92" fill="none"/>
<path d="M452.2 230.0L477.5 230.0" stroke="#242424" stroke-width="0.68" fill="none"/>
<path d="M452.2 234.5L477.5 234.5" stroke="#5e5e5e" stroke-width="0.5" fill="none"/>
<path d="M477.5 230.0L477.5 251.5" stroke="#242424" stroke-width="0.68" fill="none"/>
<path d="M431.7 227.5L431.7 251.5" stroke="#242424" stroke-width="0.68" fill="none"/>
<rect x="410.0" y="238.7" width="3.9" height="6.6" rx="0" stroke="#242424" stroke-width="0.5" fill="none"/>
<path d="M408.8 231.0L408.8 246.0" stroke="#5e5e5e" stroke-width="0.5" fill="none"/>
<rect x="412.5" y="262.8" width="14.2" height="3.7" rx="0" stroke="#242424" stroke-width="0.68" fill="none"/>
<rect x="481.5" y="252.0" width="23.5" height="15.2" rx="0" stroke="#242424" stroke-width="0.92" fill="none"/>
<path d="M497.5 269.500q-0.700 9 0 18M497.5 291q-0.700 8 0 16.500" stroke="#242424" stroke-width="0.950" fill="none"/>
<path d="M502.5 267.2L502.5 309.0" stroke="#5e5e5e" stroke-width="0.5" fill="none"/>
<path d="M481.2 289.2L502.5 289.2" stroke="#242424" stroke-width="0.68" fill="none"/>
<rect x="484.2" y="305.3" width="13.3" height="3.0" rx="0" stroke="#5e5e5e" stroke-width="0.5" fill="none"/>
<path d="M484.2 309.6L502.5 309.6" stroke="#5e5e5e" stroke-width="0.5" fill="none"/>
<g transform="translate(417.3 234.0) rotate(-28)"><rect x="-8.70" y="-6.50" width="17.4" height="13" rx="2.4" fill="#fff" stroke="#242424" stroke-width="0.88"/><rect x="-3.85" y="-3.25" width="7.7" height="6.5" rx="0.6" fill="none" stroke="#242424" stroke-width="0.7040000000000001"/></g>
<g transform="translate(497.2 232.7) rotate(25)"><rect x="-8.40" y="-5.80" width="16.8" height="11.6" rx="1.6" fill="#fff" stroke="#242424" stroke-width="0.88"/><rect x="-3.75" y="-3.05" width="7.5" height="6.1" rx="0.6" fill="none" stroke="#242424" stroke-width="0.7040000000000001"/></g>
<g transform="translate(483.1 233.1) rotate(45)"><rect x="-3.10" y="-3.10" width="6.2" height="6.2" rx="1.2" fill="#fff" stroke="#242424" stroke-width="0.88"/></g>
<g transform="translate(500.3 244.4) rotate(43)"><rect x="-3.25" y="-3.25" width="6.5" height="6.5" rx="1.2" fill="#fff" stroke="#242424" stroke-width="0.88"/></g>
<rect x="494.5" y="214.2" width="8" height="2" fill="#0a0a0a"/>
<path d="M552.2 267.8L650.5 267.8L650.5 335.8L626.3 335.8L626.3 292.0L576.7 292.0L576.7 311.7L552.2 311.7z" stroke="#242424" stroke-width="0.68" fill="none" stroke-linejoin="miter"/>
<rect x="576.9" y="268.0" width="15.6" height="23.7" rx="0" stroke="#242424" stroke-width="0.92" fill="none"/>
<path d="M592.5 270.3L620.0 270.3" stroke="#242424" stroke-width="0.68" fill="none"/>
<path d="M592.5 275.0L620.0 275.0" stroke="#5e5e5e" stroke-width="0.5" fill="none"/>
<path d="M620.0 270.3L620.0 292.0" stroke="#242424" stroke-width="0.68" fill="none"/>
<rect x="555.0" y="279.2" width="3.7" height="6.6" rx="0" stroke="#242424" stroke-width="0.5" fill="none"/>
<path d="M553.5 271.0L553.5 286.0" stroke="#5e5e5e" stroke-width="0.5" fill="none"/>
<rect x="557.5" y="303.3" width="13.8" height="3.4" rx="0" stroke="#242424" stroke-width="0.68" fill="none"/>
<path d="M642.500 294q-0.700 9 0 18M642.500 315.500q-0.700 8 0 16.500" stroke="#242424" stroke-width="0.950" fill="none"/>
<path d="M647.0 292.0L647.0 335.8" stroke="#5e5e5e" stroke-width="0.5" fill="none"/>
<path d="M626.3 313.8L647.0 313.8" stroke="#242424" stroke-width="0.68" fill="none"/>
<path d="M626.3 292.0L650.5 292.0" stroke="#242424" stroke-width="0.68" fill="none"/>
<rect x="629.2" y="329.2" width="13.3" height="3.8" rx="0" stroke="#5e5e5e" stroke-width="0.5" fill="none"/>
<path d="M629.0 334.2L647.0 334.2" stroke="#5e5e5e" stroke-width="0.5" fill="none"/>
<g transform="translate(562.3 274.3) rotate(-28)"><rect x="-8.70" y="-6.50" width="17.4" height="13" rx="2.4" fill="#fff" stroke="#242424" stroke-width="0.88"/><rect x="-3.85" y="-3.25" width="7.7" height="6.5" rx="0.6" fill="none" stroke="#242424" stroke-width="0.7040000000000001"/></g>
<g transform="translate(641.9 273.0) rotate(25)"><rect x="-8.40" y="-5.80" width="16.8" height="11.6" rx="1.6" fill="#fff" stroke="#242424" stroke-width="0.88"/><rect x="-3.75" y="-3.05" width="7.5" height="6.1" rx="0.6" fill="none" stroke="#242424" stroke-width="0.7040000000000001"/></g>
<g transform="translate(627.8 273.4) rotate(45)"><rect x="-3.10" y="-3.10" width="6.2" height="6.2" rx="1.2" fill="#fff" stroke="#242424" stroke-width="0.88"/></g>
<g transform="translate(645.2 284.7) rotate(43)"><rect x="-3.25" y="-3.25" width="6.5" height="6.5" rx="1.2" fill="#fff" stroke="#242424" stroke-width="0.88"/></g>
<path d="M106.4 332.8L198.7 332.8L198.7 395.5L174.7 395.5L174.7 357.2L130.8 357.2L130.8 370.0L106.4 370.0z" stroke="#242424" stroke-width="0.68" fill="none" stroke-linejoin="miter"/>
<path d="M130.8 335.8L174.5 335.8" stroke="#242424" stroke-width="0.68" fill="none"/>
<path d="M130.8 340.2L174.5 340.2" stroke="#242424" stroke-width="0.6" fill="none"/>
<path d="M130.8 332.8L130.8 357.2" stroke="#242424" stroke-width="0.68" fill="none"/>
<path d="M152.5 335.8L152.5 357.2" stroke="#242424" stroke-width="0.68" fill="none"/>
<path d="M174.5 332.8L174.5 357.2" stroke="#242424" stroke-width="0.68" fill="none"/>
<rect x="109.2" y="343.3" width="4.5" height="10.9" rx="0" stroke="#242424" stroke-width="0.5" fill="none"/>
<path d="M107.6 336.0L107.6 354.0" stroke="#5e5e5e" stroke-width="0.5" fill="none"/>
<path d="M174.7 364.2L190.3 364.2" stroke="#5e5e5e" stroke-width="0.55" fill="none"/>
<path d="M190.3 357.0L190.3 393.0" stroke="#242424" stroke-width="0.9" fill="none"/>
<path d="M195.5 357.0L195.5 393.0" stroke="#5e5e5e" stroke-width="0.5" fill="none"/>
<path d="M190.3 373.3L195.5 373.3" stroke="#242424" stroke-width="0.68" fill="none"/>
<rect x="177.5" y="385.5" width="13.1" height="9.2" rx="1.5" stroke="#5e5e5e" stroke-width="0.55" fill="none"/>
<path d="M177.6 387.0L177.6 393.4" stroke="#242424" stroke-width="0.8" fill="none"/>
<path d="M190.3 393.4L196.0 393.4" stroke="#5e5e5e" stroke-width="0.5" fill="none"/>
<g transform="translate(115.5 340.0) rotate(-31)"><rect x="-8.20" y="-6.50" width="16.4" height="13" rx="2.2" fill="#fff" stroke="#242424" stroke-width="0.88"/><rect x="-3.65" y="-3.00" width="7.3" height="6" rx="0.6" fill="none" stroke="#242424" stroke-width="0.7040000000000001"/></g>
<g transform="translate(126.8 338.3) rotate(5)"><rect x="-3.50" y="-3.10" width="7" height="6.2" rx="1.2" fill="#fff" stroke="#242424" stroke-width="0.88"/></g>
<g transform="translate(178.6 337.6) rotate(40)"><rect x="-3.30" y="-3.30" width="6.6" height="6.6" rx="1.8" fill="#fff" stroke="#242424" stroke-width="0.88"/></g>
<g transform="translate(179.4 338.2) rotate(40)"><rect x="-3.30" y="-3.30" width="6.6" height="6.6" rx="1.8" fill="#fff" stroke="#242424" stroke-width="0.88"/></g>
<g transform="translate(192.1 340.7) rotate(37)"><rect x="-8.10" y="-5.50" width="16.2" height="11" rx="2" fill="#fff" stroke="#242424" stroke-width="0.88"/><rect x="-3.50" y="-2.80" width="7" height="5.6" rx="0.6" fill="none" stroke="#242424" stroke-width="0.7040000000000001"/></g>
<g transform="translate(193.7 353.0) rotate(42)"><rect x="-3.30" y="-3.30" width="6.6" height="6.6" rx="1.2" fill="#fff" stroke="#242424" stroke-width="0.88"/></g>
<rect x="190.0" y="316.7" width="7.8" height="2" fill="#0a0a0a"/>
<path d="M258.9 332.8L351.2 332.8L351.2 395.5L327.2 395.5L327.2 357.2L283.3 357.2L283.3 370.0L258.9 370.0z" stroke="#242424" stroke-width="0.68" fill="none" stroke-linejoin="miter"/>
<path d="M283.3 335.8L327.0 335.8" stroke="#242424" stroke-width="0.68" fill="none"/>
<path d="M283.3 340.2L327.0 340.2" stroke="#242424" stroke-width="0.6" fill="none"/>
<path d="M283.3 332.8L283.3 357.2" stroke="#242424" stroke-width="0.68" fill="none"/>
<path d="M305.0 335.8L305.0 357.2" stroke="#242424" stroke-width="0.68" fill="none"/>
<path d="M327.0 332.8L327.0 357.2" stroke="#242424" stroke-width="0.68" fill="none"/>
<rect x="261.7" y="343.3" width="4.5" height="10.9" rx="0" stroke="#242424" stroke-width="0.5" fill="none"/>
<path d="M260.1 336.0L260.1 354.0" stroke="#5e5e5e" stroke-width="0.5" fill="none"/>
<path d="M327.2 364.2L342.8 364.2" stroke="#5e5e5e" stroke-width="0.55" fill="none"/>
<path d="M342.8 357.0L342.8 393.0" stroke="#242424" stroke-width="0.9" fill="none"/>
<path d="M348.0 357.0L348.0 393.0" stroke="#5e5e5e" stroke-width="0.5" fill="none"/>
<path d="M342.8 373.3L348.0 373.3" stroke="#242424" stroke-width="0.68" fill="none"/>
<rect x="330.0" y="385.5" width="13.1" height="9.2" rx="1.5" stroke="#5e5e5e" stroke-width="0.55" fill="none"/>
<path d="M330.1 387.0L330.1 393.4" stroke="#242424" stroke-width="0.8" fill="none"/>
<path d="M342.8 393.4L348.5 393.4" stroke="#5e5e5e" stroke-width="0.5" fill="none"/>
<g transform="translate(268.0 340.0) rotate(-31)"><rect x="-8.20" y="-6.50" width="16.4" height="13" rx="2.2" fill="#fff" stroke="#242424" stroke-width="0.88"/><rect x="-3.65" y="-3.00" width="7.3" height="6" rx="0.6" fill="none" stroke="#242424" stroke-width="0.7040000000000001"/></g>
<g transform="translate(279.3 338.3) rotate(5)"><rect x="-3.50" y="-3.10" width="7" height="6.2" rx="1.2" fill="#fff" stroke="#242424" stroke-width="0.88"/></g>
<g transform="translate(331.1 337.6) rotate(40)"><rect x="-3.30" y="-3.30" width="6.6" height="6.6" rx="1.8" fill="#fff" stroke="#242424" stroke-width="0.88"/></g>
<g transform="translate(331.9 338.2) rotate(40)"><rect x="-3.30" y="-3.30" width="6.6" height="6.6" rx="1.8" fill="#fff" stroke="#242424" stroke-width="0.88"/></g>
<g transform="translate(344.6 340.7) rotate(37)"><rect x="-8.10" y="-5.50" width="16.2" height="11" rx="2" fill="#fff" stroke="#242424" stroke-width="0.88"/><rect x="-3.50" y="-2.80" width="7" height="5.6" rx="0.6" fill="none" stroke="#242424" stroke-width="0.7040000000000001"/></g>
<g transform="translate(346.2 353.0) rotate(42)"><rect x="-3.30" y="-3.30" width="6.6" height="6.6" rx="1.2" fill="#fff" stroke="#242424" stroke-width="0.88"/></g>
<path d="M407.2 351.3L505.8 351.3L505.8 375.3L431.7 375.3L431.7 395.3L407.2 395.3z" stroke="#242424" stroke-width="0.68" fill="none" stroke-linejoin="miter"/>
<rect x="432.0" y="351.6" width="15.5" height="23.7" rx="0" stroke="#242424" stroke-width="0.92" fill="none"/>
<path d="M447.5 354.2L475.8 354.2" stroke="#242424" stroke-width="0.68" fill="none"/>
<path d="M447.5 358.7L475.8 358.7" stroke="#242424" stroke-width="0.8" fill="none"/>
<path d="M452.500 359.500q8.500 1.700 17 0" stroke="#5e5e5e" stroke-width="0.5" fill="none"/>
<path d="M475.8 354.2L475.8 375.3" stroke="#242424" stroke-width="0.68" fill="none"/>
<path d="M504.2 351.3L504.2 375.3" stroke="#5e5e5e" stroke-width="0.5" fill="none"/>
<rect x="498.3" y="365.8" width="4.2" height="4.2" rx="0" stroke="#242424" stroke-width="0.5" fill="none"/>
<path d="M431.7 351.3L431.7 375.3" stroke="#242424" stroke-width="0.68" fill="none"/>
<path d="M410.0 362.0L410.0 371.0" stroke="#5e5e5e" stroke-width="0.5" fill="none"/>
<path d="M410.0 371.0L413.0 371.0" stroke="#5e5e5e" stroke-width="0.5" fill="none"/>
<rect x="412.5" y="386.7" width="14.2" height="3.6" rx="0" stroke="#242424" stroke-width="0.68" fill="none"/>
<g transform="translate(417.5 357.5) rotate(-27)"><rect x="-8.40" y="-6.20" width="16.8" height="12.4" rx="2" fill="#fff" stroke="#242424" stroke-width="0.88"/><rect x="-3.75" y="-3.10" width="7.5" height="6.2" rx="0.6" fill="none" stroke="#242424" stroke-width="0.7040000000000001"/></g>
<g transform="translate(416.3 367.0) rotate(42)"><rect x="-3.25" y="-3.25" width="6.5" height="6.5" rx="1.2" fill="#fff" stroke="#242424" stroke-width="0.88"/></g>
<g transform="translate(497.5 357.5) rotate(27)"><rect x="-8.40" y="-6.20" width="16.8" height="12.4" rx="2" fill="#fff" stroke="#242424" stroke-width="0.88"/><rect x="-3.75" y="-3.10" width="7.5" height="6.2" rx="0.6" fill="none" stroke="#242424" stroke-width="0.7040000000000001"/></g>
<g transform="translate(483.3 357.2) rotate(18)"><rect x="-3.30" y="-3.30" width="6.6" height="6.6" rx="1.2" fill="#fff" stroke="#242424" stroke-width="0.88"/></g>
<rect x="497.5" y="340.0" width="7.5" height="2" fill="#0a0a0a"/>
<rect x="585.8" y="371.2" width="64.7" height="24.1" rx="0" stroke="#242424" stroke-width="0.68" fill="none"/>
<rect x="586.0" y="371.4" width="20.7" height="23.6" rx="0" stroke="#242424" stroke-width="0.92" fill="none"/>
<path d="M606.7 373.8L647.8 373.8" stroke="#242424" stroke-width="0.68" fill="none"/>
<path d="M606.7 378.3L645.0 378.3" stroke="#242424" stroke-width="0.8" fill="none"/>
<path d="M628.3 373.8L628.3 395.3" stroke="#242424" stroke-width="0.68" fill="none"/>
<path d="M609.2 379.2q8.200 1.700 16.400 0" stroke="#5e5e5e" stroke-width="0.5" fill="none"/>
<rect x="640.4" y="378.9" width="8.2" height="13.7" rx="1.0" stroke="#242424" stroke-width="0.55" fill="none"/>
<path d="M641.5 393.1L648.0 393.1" stroke="#242424" stroke-width="0.8" fill="none"/>
<path d="M647.8 371.2L647.8 395.3" stroke="#5e5e5e" stroke-width="0.5" fill="none"/>
<ellipse cx="648.8" cy="375.4" rx="1" ry="3" fill="#fff" stroke="#5e5e5e" stroke-width="0.4"/>
<rect x="642.0" y="363.8" width="8" height="2.2" fill="#0a0a0a"/>
<defs>
<linearGradient id="gB" x1="0" y1="0" x2="1" y2="1"><stop offset="0" stop-color="#1d4580"/><stop offset="1" stop-color="#26539a"/></linearGradient>
<linearGradient id="gY" x1="0" y1="0" x2="1" y2="0"><stop offset="0" stop-color="#f3e27a"/><stop offset="0.5" stop-color="#efd23a"/><stop offset="1" stop-color="#d9b21c"/></linearGradient>
<linearGradient id="gR" x1="0" y1="0" x2="0" y2="1"><stop offset="0" stop-color="#e8323a"/><stop offset="0.55" stop-color="#d31f27"/><stop offset="1" stop-color="#b8141c"/></linearGradient>
<radialGradient id="gC" cx="0.5" cy="0.4" r="0.6"><stop offset="0" stop-color="#b5161d"/><stop offset="1" stop-color="#7e0c12"/></radialGradient>
<clipPath id="cpD"><path d="M37.500 310.800h24.300l12.100 13.700v33.700h-36.400z"/></clipPath>
<linearGradient id="gB2" x1="0" y1="0" x2="0" y2="1"><stop offset="0" stop-color="#27569a"/><stop offset="1" stop-color="#3f6fae"/></linearGradient>
</defs>
<g clip-path="url(#cpD)">
<rect x="37.5" y="310.8" width="36.4" height="47.4" fill="url(#gB)"/>
<path d="M37.5 326.4h36.400v18l-36.400-8.600z" fill="url(#gB2)"/>
<path d="M37.500 335.500l36.400 8.400v14.300h-36.400z" fill="url(#gY)"/>
<path d="M37.500 335.500l36.400 8.400v2.600l-36.400-7.600z" fill="#fbf3b8" opacity="0.600"/>
<path d="M37.500 352h36.400v6.200h-36.400z" fill="#fff6c8" opacity="0.350"/>
<path d="M48.600 310.800v25.400M37.500 326.400h36.400" stroke="#cfe2f4" stroke-width="0.950" fill="none"/>
<rect x="44.200" y="322" width="8.800" height="8.800" fill="#22508f" stroke="#d6e7f6" stroke-width="1"/><rect x="48" y="325.800" width="1.200" height="1.200" fill="#cfe2f4"/>
</g>
<path d="M61.800 310.800l12.100 13.700q-4.600-1.800-9.400-0.600q0.600-6.400-2.700-13.100z" fill="#1c3866"/><path d="M61.800 310.800q3.300 6.700 2.700 13.100" fill="none" stroke="#7fa2d6" stroke-width="0.600"/>
<text x="47.300" y="355.200" font-size="9.600" font-weight="bold" fill="#0c0c0c" textLength="25" lengthAdjust="spacingAndGlyphs">.dwg</text>
<rect x="5.3" y="366.3" width="97" height="33.6" rx="16.8" fill="#9f1118"/>
<rect x="6.4" y="367.3" width="94.8" height="31.4" rx="15.7" fill="url(#gR)"/>
<text x="14.8" y="389" font-size="12.6" font-weight="bold" fill="#fff" textLength="56.4" lengthAdjust="spacingAndGlyphs">DOWNLOAD</text>
<circle cx="84.7" cy="383.4" r="10.9" fill="url(#gC)"/>
<path d="M82.2 376.2h5v6.8h4.3l-6.8 7.6-6.8-7.6h4.3z" fill="#fff"/>
<g><path d="M748 96q2.600-1.200 5 0.200q4.400 0.200 6 3.600q0.800 2.800-0.800 5.600q-0.400 4.600-1.800 8.800q-2-2.800-3-6.200q-3.200-2-4.200-5.400q-0.600-3.400-1.200-6.600z" fill="#f4bf2e" stroke="#c8901a" stroke-width="0.5"/><path d="M750.600 98.200q2.600 4.200 5.200 8.400M753.600 97q2.400 3.600 4 7.600" stroke="#fbe38a" stroke-width="0.900" fill="none" stroke-linecap="round"/><path d="M716.200 129.600l-5.800 3.800q-1.600 4.400-2.400 8l4.200 1.200q1.400-3.800 3-6.400l5.800-1.600q4.400 2.400 7.600 5.400l2.200 5.800 4.200-1.200q-1.200-5-3.200-8.800q-3-3.600-5.600-6.800z" fill="#2a86d8" stroke="#1b3f6e" stroke-width="0.5" stroke-linejoin="round"/><path d="M708 141.200l-3.600 2.600q-0.600 1.400 0.600 1.800l6.200-1.200 1.200-2z" fill="#1f6fc4" stroke="#1b3f6e" stroke-width="0.4"/><path d="M730.600 141.400l4-1.400 1 2.800-4 1.400z" fill="#3a3a3e"/><path d="M731.600 144.200l4-1.400 1.200 3-1.800 1.400-2.400-0.400z" fill="#1f6fc4" stroke="#1b3f6e" stroke-width="0.4"/><path d="M709 137.600l4 1.400" stroke="#3a3a3e" stroke-width="1.100"/><path d="M716.600 113.400q-5.600 3.600-10.800 8.800l2.200 3.400q5.600-3 10.600-7z" fill="#2a86d8" stroke="#1b3f6e" stroke-width="0.5" stroke-linejoin="round"/><path d="M716 113.600q6.600-2.400 13.600 0.400l1.400 9.600q-0.200 5.400-0.800 10.200q-7.600 2.400-15 0.200q-0.400-10.600 0.800-20.400z" fill="#2784d8" stroke="#1b3f6e" stroke-width="0.5"/><path d="M722.800 113.400q0.400 9.800-0.200 20.600" stroke="#1b3f6e" stroke-width="0.5" fill="none"/><path d="M715.400 131.200q7.400 2 14.800-0.200" stroke="#c9a04a" stroke-width="0.5" fill="none"/><path d="M720 112.800l2.800 3.400 3-3.600" fill="none" stroke="#1b3f6e" stroke-width="0.5"/><path d="M716.400 116q-0.600 8-0.400 15.600l3 0.600q-0.400-8.200 0.400-16z" fill="#1f6fc4" opacity="0.6"/><path d="M729 114q5 2.400 7.600 6.200l-0.200-8 3.600-0.400q1 6.600 0.200 12.400q-2 2.200-4.800 1.200q-3.600-2.600-7-5.400z" fill="#2a86d8" stroke="#1b3f6e" stroke-width="0.5" stroke-linejoin="round"/><path d="M693.800 127.500L752.600 106.200" stroke="#6d3a1c" stroke-width="2.300" stroke-linecap="round"/><path d="M693.800 127.400L752.600 106.100" stroke="#a8683a" stroke-width="1.300" stroke-linecap="round"/><path d="M694.400 126.800L752.200 105.800" stroke="#d09a66" stroke-width="0.400" stroke-linecap="round"/><ellipse cx="706.600" cy="123" rx="2.200" ry="1.900" fill="#f3c095" stroke="#7a4a2a" stroke-width="0.400"/><ellipse cx="738.200" cy="110.600" rx="2.300" ry="2" fill="#f3c095" stroke="#7a4a2a" stroke-width="0.400"/><path d="M710 97q-1.400 8.600 3.200 13q4.400 3.800 10 3.400q7.200-0.600 10.800-6q2.600-4.400 2.600-10.400z" fill="#f3c095" stroke="#7a4a2a" stroke-width="0.500"/><path d="M735.800 98.600q2.600 0.400 2.400 3q-0.400 2.800-2.800 3.400z" fill="#eeb088" stroke="#7a4a2a" stroke-width="0.400"/><path d="M733.800 97.600l2.600-0.200 0.600 4.600-1 3.600-1.400-0.600z" fill="#f4bf2e"/><ellipse cx="716" cy="100.300" rx="2.500" ry="1.700" fill="#fff"/><ellipse cx="727" cy="100.700" rx="2.700" ry="1.800" fill="#fff"/><circle cx="716.600" cy="100.500" r="1.150" fill="#3a5a86"/><circle cx="726.300" cy="100.900" r="1.200" fill="#3a5a86"/><path d="M713.200 99.600q2.800-1.600 5.600 0M724 99.800q3-1.600 6 0.200" fill="none" stroke="#2a1a12" stroke-width="0.800" stroke-linecap="round"/><path d="M713.600 101.600q2.400 1.200 4.800 0M724.400 102q2.600 1.200 5.200 0" fill="none" stroke="#7a4a2a" stroke-width="0.350"/><path d="M718.400 107q4.600 2.400 9.200-1.400" fill="none" stroke="#6a2e1e" stroke-width="0.700" stroke-linecap="round"/><path d="M719.800 103.800q1 1.200 2.200 0.400M721.600 110.400q1.600 0.600 3 0" fill="none" stroke="#9a6a4a" stroke-width="0.400" stroke-linecap="round"/><path d="M711.400 93q-0.400-6 3.200-10.200q0.800 0.800 1 1.800q2.400-3.800 6-5q0.200 1 0 1.800q2.800-2.600 6-2.600q-0.200 1-0.600 1.600q3.800-0.200 6.400 2.600q-1 0.200-1.600 0.600q3.800 2.400 5.200 6.400q0.800 2.400 0.600 4.400z" fill="#f5a71a" stroke="#a8620c" stroke-width="0.500" stroke-linejoin="round"/><path d="M714.600 91.600q0.200-4.400 2.800-7.400M719.600 91q0.600-5.400 3.600-8.600M725.400 90.800q1-4.800 3.800-7.400M731 91q1-3 3-4.600" fill="none" stroke="#fde27a" stroke-width="1.500" stroke-linecap="round"/><path d="M717.200 91.400q0.400-4 2.200-6.400M722.800 91q0.800-4.600 3-7.200M728.400 91q1-3.600 3-5.600M733.600 91.400q0.600-1.800 1.800-2.800" fill="none" stroke="#e08a10" stroke-width="0.700" stroke-linecap="round"/><path d="M709.400 93q14-3 29-1.800l0.400 6q-7 1.400-14 2q-8 0-15-2.400z" fill="#3d3d40" stroke="#1e1e20" stroke-width="0.400"/><path d="M710 94.200q14-2.800 28-1.800" stroke="#6a6a6e" stroke-width="0.500" fill="none"/><path d="M738.200 91.800q3.400-1.800 6.600 0.800q1.800 1.400 3 3.200l-1.400 0.600q-2.600-2.800-5.400-2.800q2.600 2 2.800 5.400q0 1.400-0.600 2.600l-1.400-0.600q0.200-4-3.400-6z" fill="#2c2c2f"/></g>
<path d="M679.400 145.400q-0.800 5.600-1.400 11.400" fill="none" stroke="#35a3e6" stroke-width="2.15" stroke-linecap="round" stroke-linejoin="round"/>
<path d="M678 146q4.400-2.200 7.800-0.600q2.400 2 0.800 4.800q-2.400 2.800-7.200 3" fill="none" stroke="#35a3e6" stroke-width="1.95" stroke-linecap="round" stroke-linejoin="round"/>
<path d="M690 157.800q0 1.600 0.400 3" fill="none" stroke="#2387dc" stroke-width="1.95" stroke-linecap="round" stroke-linejoin="round"/>
<path d="M698.200 156.400q-3.200-1-3.800 1q0 1.400 2.200 2q2 0.800 1 2.200q-1.600 1.200-3.800 0.200" fill="none" stroke="#2387dc" stroke-width="1.75" stroke-linecap="round" stroke-linejoin="round"/>
<path d="M701.400 152.800q-0.200 5.600 0.600 10.800" fill="none" stroke="#1e6fc6" stroke-width="1.95" stroke-linecap="round" stroke-linejoin="round"/>
<path d="M705.800 158.200q0 3 0.300 5.600" fill="none" stroke="#1e6fc6" stroke-width="1.85" stroke-linecap="round" stroke-linejoin="round"/>
<circle cx="705.500" cy="155.200" r="0.850" fill="#1e6fc6"/>
<path d="M710.300 152.800q-0.200 6.200 0.100 12.200" fill="none" stroke="#1e6fc6" stroke-width="2.05" stroke-linecap="round" stroke-linejoin="round"/>
<path d="M716.600 158q-3 1.400-5.200 2.800q3 1.800 6.400 4.200" fill="none" stroke="#1e6fc6" stroke-width="1.75" stroke-linecap="round" stroke-linejoin="round"/>
<path d="M722 163.300q0.600-6.200 2-11.300q2.200 4 4 8q1.800-4.800 4.700-8.700q1 6 1.300 12.700" fill="none" stroke="#1e6fc6" stroke-width="2.05" stroke-linecap="round" stroke-linejoin="round"/>
<path d="M737.800 157.400q0.100 2.800 0.500 5.200" fill="none" stroke="#2387dc" stroke-width="1.85" stroke-linecap="round" stroke-linejoin="round"/>
<circle cx="737.400" cy="154.400" r="0.800" fill="#2387dc"/>
<path d="M741.300 162.600q-0.200-2.600 0-4.600q1.800-2 3.200-1.200q0.800 2.400 0.800 5.200q0.600-3.600 3.200-6q1.400 2.200 1.800 5.400" fill="none" stroke="#2387dc" stroke-width="1.75" stroke-linecap="round" stroke-linejoin="round"/>
<path d="M758 155.600q-3.400-1.400-5 1q-0.800 2.600 1.600 3.200q2.400-0.200 3.600-4q0 2.400 1.200 4.200" fill="none" stroke="#2387dc" stroke-width="1.75" stroke-linecap="round" stroke-linejoin="round"/>
<path d="M762.700 153.400q0.400 2.800 0.400 5.400" fill="none" stroke="#35a3e6" stroke-width="1.85" stroke-linecap="round" stroke-linejoin="round"/>
<path d="M763 155.600q2.600-3.600 7-5.600" fill="none" stroke="#35a3e6" stroke-width="1.75" stroke-linecap="round" stroke-linejoin="round"/>
<path d="M770 150q-0.200 1.400-0.800 2.400" fill="none" stroke="#35a3e6" stroke-width="1.55" stroke-linecap="round" stroke-linejoin="round"/>
</g>
</svg>
</body></html>
